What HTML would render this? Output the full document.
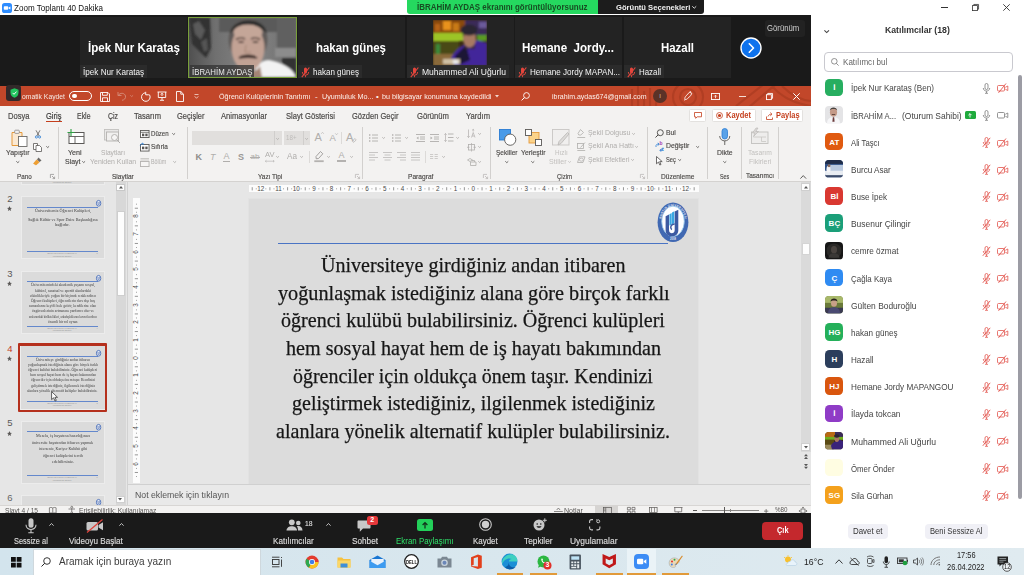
<!DOCTYPE html>
<html lang="tr">
<head>
<meta charset="utf-8">
<title>Zoom Toplantı 40 Dakika</title>
<style>
*{box-sizing:border-box;margin:0;padding:0}
html,body{width:1024px;height:575px;overflow:hidden;background:#fff}
body{font-family:"Liberation Sans",sans-serif;position:relative;color:#222}
.a{position:absolute}
.t{position:absolute;white-space:nowrap}
svg{position:absolute;overflow:visible}
</style>
</head>
<body>
<!-- sec_top -->
<div class="a" style="left:0px;top:0px;width:811px;height:15px;background:#fff;"></div>
<svg style="left:2px;top:3px" width="10" height="10" viewBox="0 0 10 10"><rect width="10" height="10" rx="2.600" fill="#2d8cff"/><rect x="1.800" y="3.200" width="4.400" height="3.600" rx="0.800" fill="#fff"/><path d="M6.600 4.600L8.400 3.400V6.600L6.600 5.400Z" fill="#fff"/></svg>
<div class="t" style="top:3px;font-size:9.5px;line-height:9.5px;color:#111;left:14px;transform-origin:0 0;transform:scaleX(0.848);">Zoom Toplantı 40 Dakika</div>
<div class="a" style="left:407px;top:0px;width:191px;height:13.5px;background:#25d85f;border-radius:0 0 0 3px;"></div>
<div class="t" style="top:3px;font-size:8.5px;line-height:8.5px;color:#174d22;font-weight:bold;left:417px;transform-origin:0 0;transform:scaleX(0.936);">İBRAHİM AYDAŞ ekranını görüntülüyorsunuz</div>
<div class="a" style="left:597.5px;top:0px;width:106.2px;height:13.5px;background:#1c1c1c;border-radius:0 0 3px 0;"></div>
<div class="t" style="top:4px;font-size:8px;line-height:8px;color:#f0f0f0;font-weight:bold;left:615.6px;transform-origin:0 0;transform:scaleX(0.951);">Görüntü Seçenekleri</div>
<svg style="left:692.45px;top:6.1px" width="4.5" height="2.4" viewBox="0 0 4.5 2.4"><path d="M0.3 0.3L2.25 2.2L4.2 0.3" stroke="#eee" stroke-width="0.9" fill="none"/></svg>
<div class="a" style="left:0px;top:15px;width:811px;height:71px;background:#1a1a1a;"></div>
<div class="a" style="left:80px;top:17px;width:107px;height:61px;background:#232323;"></div>
<div class="t" style="top:42px;font-size:12.5px;line-height:12.5px;color:#fff;font-weight:bold;left:87.5px;transform-origin:0 0;transform:scaleX(0.926);">İpek Nur Karataş</div>
<div class="a" style="left:80px;top:65px;width:67px;height:13px;background:rgba(44,44,44,.9);"></div><div class="t" style="top:67px;font-size:9.5px;line-height:9.5px;color:#f4f4f4;left:83px;transform-origin:0 0;transform:scaleX(0.856);">İpek Nur Karataş</div>
<div class="a" style="left:188px;top:17px;width:109px;height:61px;border:1px solid #789f3a;overflow:hidden;background:#666"><svg style="left:0;top:0" width="107" height="59" viewBox="0 0 107 59">
<defs><linearGradient id="pg" x1="0" x2="1"><stop offset="0" stop-color="#505050"/><stop offset="0.25" stop-color="#707070"/><stop offset="0.6" stop-color="#858585"/><stop offset="1" stop-color="#6c6c6c"/></linearGradient>
<filter id="bl" x="-20%" y="-20%" width="140%" height="140%"><feGaussianBlur stdDeviation="1"/></filter>
<clipPath id="pc"><rect width="107" height="59"/></clipPath></defs>
<g clip-path="url(#pc)"><rect width="107" height="59" fill="url(#pg)"/>
<g filter="url(#bl)">
<path d="M0 0H21L22 30L17 40L3 26Z" fill="#303030"/>
<path d="M4 6L10 3L16 12L12 22L6 16Z" fill="#5a5a5a"/><path d="M12 24L18 20L19 32L15 34Z" fill="#555"/>
<rect x="30" y="0" width="77" height="14" fill="#5a5a5a"/>
<rect x="88" y="0" width="19" height="30" fill="#606060"/>
<rect x="93" y="40" width="14" height="19" fill="#333"/>
<rect x="86" y="30" width="21" height="9" fill="#8c8c8c"/>
<path d="M64 59C66 48 72 42 80 42C92 44 104 50 107 59Z" fill="#f2f2f2"/>
<ellipse cx="59" cy="22" rx="19.500" ry="22" fill="#5e5a58"/>
<path d="M41 16C43 -2 76 -2 78 16C72 6 47 6 41 16Z" fill="#2c2a29"/>
<ellipse cx="59" cy="30" rx="16.500" ry="23" fill="#c2a294"/>
<ellipse cx="59" cy="14" rx="14.500" ry="7.500" fill="#c4a698"/>
<path d="M47 21.500C50 19.500 54 19.800 56 21M62 21C64 19.800 68 19.500 71 21.500" stroke="#4a3a34" stroke-width="1.600" fill="none"/>
<ellipse cx="52" cy="24" rx="3" ry="1.100" fill="#4c3c36"/><ellipse cx="66.500" cy="24" rx="3" ry="1.100" fill="#4c3c36"/>
<path d="M57 27L56 34H62" stroke="#a88878" stroke-width="1.200" fill="none"/>
<path d="M50 40C54 36.500 64 36.500 68 40C64 38.800 54 38.800 50 40Z" fill="#3c2e2a" stroke="#3c2e2a" stroke-width="1.600"/>
<path d="M47 48C52 57 66 57 71 48L73 59H46Z" fill="#a48474"/>
</g></g></svg></div>
<div class="a" style="left:190.4px;top:65px;width:64px;height:12.2px;background:rgba(52,52,52,.78);"></div>
<div class="t" style="top:67px;font-size:9.5px;line-height:9.5px;color:#e8e8e8;left:191.8px;transform-origin:0 0;transform:scaleX(0.828);">İBRAHİM AYDAŞ</div>
<div class="a" style="left:298px;top:17px;width:107px;height:61px;background:#232323;"></div>
<div class="t" style="top:42px;font-size:12.5px;line-height:12.5px;color:#fff;font-weight:bold;left:316px;transform-origin:0 0;transform:scaleX(0.916);">hakan güneş</div>
<div class="a" style="left:298px;top:65px;width:64px;height:13px;background:rgba(44,44,44,.9);"></div><svg style="left:301px;top:66.5px" width="9" height="11" viewBox="0 0 9 11"><rect x="3" y="0.5" width="3" height="6" rx="1.5" fill="#e5453c"/><path d="M1.3 5a3.2 3.2 0 0 0 6.4 0M4.5 8.200v2" stroke="#e5453c" stroke-width="0.9" fill="none"/><path d="M8.300 0.500L0.800 10.200" stroke="#e5453c" stroke-width="1.1"/></svg><div class="t" style="top:67px;font-size:9.5px;line-height:9.5px;color:#f4f4f4;left:313px;transform-origin:0 0;transform:scaleX(0.845);">hakan güneş</div>
<div class="a" style="left:407px;top:17px;width:107px;height:61px;background:#232323;"></div>
<div class="a" style="left:407px;top:17px;width:107px;height:61px"><svg style="left:26px;top:3px" width="54" height="46" viewBox="0 0 54 46">
<defs><filter id="b2" x="-10%" y="-10%" width="120%" height="120%"><feGaussianBlur stdDeviation="0.9"/></filter><clipPath id="c4"><rect width="54" height="46"/></clipPath></defs>
<g clip-path="url(#c4)"><rect width="54" height="46" fill="#3a2a12"/>
<g filter="url(#b2)">
<rect x="0" y="0" width="32" height="14" fill="#8a4a10"/>
<rect x="10" y="1" width="8" height="9" fill="#e8921c"/><rect x="20" y="3" width="6" height="8" fill="#c87a18"/><rect x="2" y="4" width="5" height="7" fill="#b86414"/>
<rect x="32" y="0" width="22" height="16" fill="#3a2a58"/><rect x="46" y="2" width="8" height="6" fill="#6a5a9a"/>
<rect x="0" y="13" width="30" height="8" fill="#9cc428"/><rect x="44" y="15" width="10" height="6" fill="#5a9a22"/>
<rect x="0" y="21" width="26" height="13" fill="#4a4a18"/><rect x="3" y="24" width="4" height="14" fill="#3a8a3a"/>
<rect x="0" y="34" width="24" height="12" fill="#8a6a3a"/>
<path d="M18 38C24 27 32 23 44 20L54 23V46H22Z" fill="#43289a"/>
<path d="M22 36L33 25L37 40L26 45Z" fill="#1c1634"/>
<ellipse cx="36.500" cy="19" rx="6.500" ry="8.500" fill="#a87a62"/>
<ellipse cx="36" cy="10" rx="8.500" ry="5.500" fill="#2c2832"/>
<path d="M31 24C33 29.500 40 29.500 42.500 23L41.500 29H32Z" fill="#3a2a28"/>
<rect x="10" y="39" width="17" height="5" fill="#d0c0a4"/><rect x="20" y="40" width="5" height="4" fill="#e8e8e8"/>
</g></g></svg></div>
<div class="a" style="left:407px;top:65px;width:102px;height:13px;background:rgba(44,44,44,.9);"></div><svg style="left:410px;top:66.5px" width="9" height="11" viewBox="0 0 9 11"><rect x="3" y="0.5" width="3" height="6" rx="1.5" fill="#e5453c"/><path d="M1.3 5a3.2 3.2 0 0 0 6.4 0M4.5 8.200v2" stroke="#e5453c" stroke-width="0.9" fill="none"/><path d="M8.300 0.500L0.800 10.200" stroke="#e5453c" stroke-width="1.1"/></svg><div class="t" style="top:67px;font-size:9.5px;line-height:9.5px;color:#f4f4f4;left:422px;transform-origin:0 0;transform:scaleX(0.899);">Muhammed Ali Uğurlu</div>
<div class="a" style="left:515px;top:17px;width:107px;height:61px;background:#232323;"></div>
<div class="t" style="top:42px;font-size:12.5px;line-height:12.5px;color:#fff;font-weight:bold;left:522px;transform-origin:0 0;transform:scaleX(0.928);">Hemane&nbsp; Jordy...</div>
<div class="a" style="left:515px;top:65px;width:107px;height:13px;background:rgba(44,44,44,.9);"></div><svg style="left:518px;top:66.5px" width="9" height="11" viewBox="0 0 9 11"><rect x="3" y="0.5" width="3" height="6" rx="1.5" fill="#e5453c"/><path d="M1.3 5a3.2 3.2 0 0 0 6.4 0M4.5 8.200v2" stroke="#e5453c" stroke-width="0.9" fill="none"/><path d="M8.300 0.500L0.800 10.200" stroke="#e5453c" stroke-width="1.1"/></svg><div class="t" style="top:67px;font-size:9.5px;line-height:9.5px;color:#f4f4f4;left:530px;transform-origin:0 0;transform:scaleX(0.854);">Hemane Jordy MAPAN...</div>
<div class="a" style="left:624px;top:17px;width:107px;height:61px;background:#232323;"></div>
<div class="t" style="top:42px;font-size:12.5px;line-height:12.5px;color:#fff;font-weight:bold;left:661px;transform-origin:0 0;transform:scaleX(0.913);">Hazall</div>
<div class="a" style="left:624px;top:65px;width:40px;height:13px;background:rgba(44,44,44,.9);"></div><svg style="left:627px;top:66.5px" width="9" height="11" viewBox="0 0 9 11"><rect x="3" y="0.5" width="3" height="6" rx="1.5" fill="#e5453c"/><path d="M1.3 5a3.2 3.2 0 0 0 6.4 0M4.5 8.200v2" stroke="#e5453c" stroke-width="0.9" fill="none"/><path d="M8.300 0.500L0.800 10.200" stroke="#e5453c" stroke-width="1.1"/></svg><div class="t" style="top:67px;font-size:9.5px;line-height:9.5px;color:#f4f4f4;left:639px;transform-origin:0 0;transform:scaleX(0.833);">Hazall</div>
<svg style="left:740px;top:36.5px" width="22" height="22" viewBox="0 0 22 22"><circle cx="11" cy="11" r="10" fill="#0e72ed" stroke="#fff" stroke-width="1.400"/><path d="M9.300 6.800L13.500 11L9.300 15.200" stroke="#fff" stroke-width="1.600" fill="none" stroke-linecap="round" stroke-linejoin="round"/></svg>
<div class="a" style="left:765px;top:20px;width:40px;height:17px;background:#222;border-radius:3px;"></div>
<div class="t" style="top:24px;font-size:8.5px;line-height:8.5px;color:#d0d0d0;left:767.3px;transform-origin:0 0;transform:scaleX(0.909);">Görünüm</div>
<!-- sec_pp -->
<div class="a" style="left:0px;top:86px;width:811px;height:20.4px;background:#c2472a;"></div>
<div class="a" style="left:560px;top:86px;width:251px;height:20px;overflow:hidden"><svg style="left:0;top:0" width="251" height="20" viewBox="0 0 251 20"><g fill="none" stroke="#ad3d22" stroke-width="2.200" opacity="0.800"><circle cx="128" cy="11" r="8"/><circle cx="128" cy="11" r="15"/><path d="M72 3V20M78 0V20M84 5V20M90 2V20M96 6V20M176 20L204 -2M188 22L216 -2M222 0C230 8 240 14 251 15M212 0C222 12 238 18 251 20"/></g></svg></div>
<div class="a" style="left:5.6px;top:85.2px;width:15.6px;height:15.4px;background:#33292a;border-radius:3px;"></div>
<svg style="left:9.5px;top:88px" width="9" height="10" viewBox="0 0 9 10"><path d="M4.500 0.300L8.500 1.700V4.800C8.500 7.300 6.800 9 4.500 9.800C2.200 9 0.500 7.300 0.500 4.800V1.700Z" fill="#22c55e"/><path d="M2.600 4.900L4 6.300L6.500 3.600" stroke="#fff" stroke-width="1" fill="none"/></svg>
<div class="t" style="top:93px;font-size:8px;line-height:8px;color:#f6e9e4;left:22px;transform-origin:0 0;transform:scaleX(0.848);">omatik Kaydet</div>
<div class="a" style="left:69px;top:91.200px;width:23px;height:9.500px;border:1px solid #fff;border-radius:5px"></div>
<div class="a" style="left:72px;top:93.7px;width:4.5px;height:4.5px;background:#fff;border-radius:50%;"></div>
<svg style="left:99.6px;top:91.6px" width="10" height="10" viewBox="0 0 10 10"><path d="M0.500 0.500H8L9.500 2V9.500H0.500Z" fill="none" stroke="#fff" stroke-width="0.900"/><path d="M2.500 0.500V3.300H7.300V0.500M2.500 9.500V5.800H7.500V9.500" fill="none" stroke="#fff" stroke-width="0.900"/></svg>
<svg style="left:117px;top:91px" width="10" height="10" viewBox="0 0 10 10"><path d="M1 1V4.500H4.500M1.300 4.300C3 1.600 7.500 1.500 8.500 5C9 7.500 7 9 5 9.300" fill="none" stroke="#d58a76" stroke-width="0.950"/></svg>
<svg style="left:129.8px;top:95.1px" width="3.4" height="1.8" viewBox="0 0 3.4 1.8"><path d="M0.3 0.3L1.7 1.6L3.1 0.3" stroke="#d58a76" stroke-width="0.8" fill="none"/></svg>
<svg style="left:139.5px;top:90.5px" width="11" height="11" viewBox="0 0 11 11"><path d="M4.500 1.300A4.300 4.300 0 1 0 8.800 3M5.200 0.300V3.300H8.300" fill="none" stroke="#fff" stroke-width="0.950" transform="translate(0.5,0.5)"/></svg>
<svg style="left:156.5px;top:91px" width="10" height="10" viewBox="0 0 10 10"><path d="M0.500 1H9.500M1.300 1V6.500H8.700V1M5 6.500V9M3 9.300H7M5 2.300V5M3.800 3.500L5 2.300L6.200 3.500" fill="none" stroke="#fff" stroke-width="0.900"/></svg>
<svg style="left:176px;top:90.5px" width="8" height="11" viewBox="0 0 8 11"><path d="M0.500 0.500H4.800L7.500 3.200V10.500H0.500ZM4.800 0.500V3.200H7.500" fill="none" stroke="#fff" stroke-width="0.900"/></svg>
<svg style="left:193.5px;top:93.5px" width="5" height="5" viewBox="0 0 5 5"><path d="M0.500 0.500H4.500" stroke="#f3d9d0" stroke-width="0.800"/><path d="M0.700 2.300L2.500 4.300L4.300 2.300" stroke="#f3d9d0" stroke-width="0.800" fill="none"/></svg>
<div class="t" style="top:93px;font-size:8px;line-height:8px;color:#fdf1ec;left:219px;transform-origin:0 0;transform:scaleX(0.892);">Öğrenci Kulüplerinin Tanıtımı</div>
<div class="t" style="top:93px;font-size:8px;line-height:8px;color:#fdf1ec;left:315px;">-</div>
<div class="t" style="top:93px;font-size:8px;line-height:8px;color:#fdf1ec;left:321.5px;transform-origin:0 0;transform:scaleX(0.898);">Uyumluluk Mo...</div>
<div class="t" style="top:93px;font-size:8px;line-height:8px;color:#fdf1ec;left:376px;">•</div>
<div class="t" style="top:93px;font-size:8px;line-height:8px;color:#fdf1ec;left:381.5px;transform-origin:0 0;transform:scaleX(0.895);">bu bilgisayar konumuna kaydedildi</div>
<svg style="left:495px;top:95px" width="4" height="2.5" viewBox="0 0 4 2.5"><path d="M0 0H4L2 2.500Z" fill="#f3d9d0"/></svg>
<svg style="left:521px;top:91.5px" width="9" height="9" viewBox="0 0 9 9"><circle cx="5.500" cy="3.500" r="2.900" fill="none" stroke="#fff" stroke-width="0.900"/><path d="M3.400 5.600L0.600 8.400" stroke="#fff" stroke-width="1"/></svg>
<div class="t" style="top:93px;font-size:8px;line-height:8px;color:#fdf1ec;left:551.5px;transform-origin:0 0;transform:scaleX(0.877);">ibrahim.aydas674@gmail.com</div>
<div class="a" style="left:653px;top:89px;width:14px;height:14px;background:#5b3227;border-radius:50%;"></div>
<div class="t" style="top:93px;font-size:6px;line-height:6px;color:#d9c0b8;left:660px;transform:translateX(-50%);">I</div>
<svg style="left:683px;top:91px" width="10" height="10" viewBox="0 0 10 10"><path d="M2 8.500L1.200 9.300M2 8.500C1.500 7 2.200 5.800 3.200 4.800L6.500 1.200L8.800 2.200L7.800 4.500L4.600 7.500C3.800 8.300 2.800 8.700 2 8.500ZM6.500 1.200L8 0.500" fill="none" stroke="#fff" stroke-width="0.850"/></svg>
<svg style="left:710.5px;top:92.5px" width="9" height="7" viewBox="0 0 9 7"><rect x="0.450" y="0.450" width="8.100" height="6.100" fill="none" stroke="#fff" stroke-width="0.900"/><path d="M4.500 5.200V2.400M3.200 3.500L4.500 2.200L5.800 3.500" stroke="#fff" stroke-width="0.800" fill="none"/></svg>
<div class="a" style="left:738.5px;top:95.5px;width:7px;height:1px;background:#f5ddd5;"></div>
<svg style="left:765.5px;top:92.5px" width="7" height="7" viewBox="0 0 7 7"><rect x="0.450" y="1.700" width="4.900" height="4.900" fill="none" stroke="#fff" stroke-width="0.900"/><path d="M1.700 1.700V0.450H6.550V5.300H5.300" fill="none" stroke="#fff" stroke-width="0.900"/></svg>
<svg style="left:793px;top:92.5px" width="7" height="7" viewBox="0 0 7 7"><path d="M0.300 0.300L6.700 6.700M6.700 0.300L0.300 6.700" stroke="#fff" stroke-width="1"/></svg>
<div class="a" style="left:0px;top:106px;width:811px;height:20px;background:#f3f2f1;"></div>
<div class="t" style="top:111px;font-size:9.5px;line-height:9.5px;color:#4c4a48;left:7.5px;transform-origin:0 0;transform:scaleX(0.798);-webkit-text-stroke:0.200px;">Dosya</div>
<div class="t" style="top:111px;font-size:9.5px;line-height:9.5px;color:#3b3a39;left:45.7px;transform-origin:0 0;transform:scaleX(0.794);-webkit-text-stroke:0.200px;">Giriş</div>
<div class="t" style="top:111px;font-size:9.5px;line-height:9.5px;color:#4c4a48;left:77px;transform-origin:0 0;transform:scaleX(0.730);-webkit-text-stroke:0.200px;">Ekle</div>
<div class="t" style="top:111px;font-size:9.5px;line-height:9.5px;color:#4c4a48;left:107.6px;transform-origin:0 0;transform:scaleX(0.728);-webkit-text-stroke:0.200px;">Çiz</div>
<div class="t" style="top:111px;font-size:9.5px;line-height:9.5px;color:#4c4a48;left:133.6px;transform-origin:0 0;transform:scaleX(0.799);-webkit-text-stroke:0.200px;">Tasarım</div>
<div class="t" style="top:111px;font-size:9.5px;line-height:9.5px;color:#4c4a48;left:176.6px;transform-origin:0 0;transform:scaleX(0.789);-webkit-text-stroke:0.200px;">Geçişler</div>
<div class="t" style="top:111px;font-size:9.5px;line-height:9.5px;color:#4c4a48;left:221.2px;transform-origin:0 0;transform:scaleX(0.799);-webkit-text-stroke:0.200px;">Animasyonlar</div>
<div class="t" style="top:111px;font-size:9.5px;line-height:9.5px;color:#4c4a48;left:286px;transform-origin:0 0;transform:scaleX(0.800);-webkit-text-stroke:0.200px;">Slayt Gösterisi</div>
<div class="t" style="top:111px;font-size:9.5px;line-height:9.5px;color:#4c4a48;left:352px;transform-origin:0 0;transform:scaleX(0.793);-webkit-text-stroke:0.200px;">Gözden Geçir</div>
<div class="t" style="top:111px;font-size:9.5px;line-height:9.5px;color:#4c4a48;left:416.7px;transform-origin:0 0;transform:scaleX(0.808);-webkit-text-stroke:0.200px;">Görünüm</div>
<div class="t" style="top:111px;font-size:9.5px;line-height:9.5px;color:#4c4a48;left:465.8px;transform-origin:0 0;transform:scaleX(0.802);-webkit-text-stroke:0.200px;">Yardım</div>
<div class="a" style="left:45.6px;top:120.7px;width:16px;height:1.8px;background:#c43e1c;"></div>
<div class="a" style="left:688.500px;top:109px;width:17.500px;height:12.500px;background:#fff;border:1px solid #e3e1df;border-radius:1.500px"></div>
<svg style="left:693.5px;top:112px" width="8" height="7" viewBox="0 0 8 7"><path d="M0.500 0.500H7.500V4.800H3.200L1.700 6.300V4.800H0.500Z" fill="none" stroke="#c43e1c" stroke-width="0.800"/></svg>
<div class="a" style="left:712px;top:109px;width:43.500px;height:12.500px;background:#fff;border:1px solid #e3e1df;border-radius:1.500px"></div>
<svg style="left:715.5px;top:111.8px" width="7" height="7" viewBox="0 0 7 7"><circle cx="3.500" cy="3.500" r="3" fill="none" stroke="#c43e1c" stroke-width="0.800"/><circle cx="3.500" cy="3.500" r="1.600" fill="#c43e1c"/></svg>
<div class="t" style="top:111px;font-size:9px;line-height:9px;color:#c43e1c;font-weight:bold;left:725.5px;transform-origin:0 0;transform:scaleX(0.833);">Kaydet</div>
<div class="a" style="left:761px;top:109px;width:42px;height:12.500px;background:#fff;border:1px solid #e3e1df;border-radius:1.500px"></div>
<svg style="left:765.5px;top:111.5px" width="8" height="8" viewBox="0 0 8 8"><path d="M0.500 4.500V7.500H6.500V5.500M2 4.500C2.500 2.800 4 2.200 5.500 2.200M4.300 0.600L6 2.200L4.300 3.800" fill="none" stroke="#c43e1c" stroke-width="0.800"/></svg>
<div class="t" style="top:111px;font-size:9px;line-height:9px;color:#c43e1c;font-weight:bold;left:776px;transform-origin:0 0;transform:scaleX(0.824);">Paylaş</div>
<div class="a" style="left:0px;top:126px;width:811px;height:55px;background:#f3f2f1;"></div>
<div class="a" style="left:0px;top:180.5px;width:811px;height:1.5px;background:#d4d2d0;"></div>
<svg style="left:10.5px;top:128.5px" width="17" height="18" viewBox="0 0 17 18"><path d="M1 3.500H11V16.500H1Z" fill="#fbe9d2" stroke="#e59a3c" stroke-width="1"/><rect x="3.700" y="1.200" width="4.600" height="3.200" rx="0.800" fill="#f3f2f1" stroke="#8a8886" stroke-width="0.800"/><rect x="7.500" y="7.500" width="8.500" height="10" fill="#fff" stroke="#6b6967" stroke-width="0.900"/></svg>
<div class="t" style="top:149px;font-size:7.6px;line-height:7.6px;color:#4a4846;left:6px;transform-origin:0 0;transform:scaleX(0.918);-webkit-text-stroke:0.150px;">Yapıştır</div>
<svg style="left:15.5px;top:161.05px" width="3.6" height="1.9" viewBox="0 0 3.6 1.9"><path d="M0.3 0.3L1.8 1.7L3.3 0.3" stroke="#605e5c" stroke-width="0.9" fill="none"/></svg>
<svg style="left:34.5px;top:129.5px" width="6" height="8.5" viewBox="0 0 6 8.5"><path d="M1 0.300L4.200 6M5 0.300L1.800 6" stroke="#5a5856" stroke-width="0.800" fill="none"/><circle cx="1.400" cy="7" r="1.100" fill="none" stroke="#2b7cd3" stroke-width="0.800"/><circle cx="4.600" cy="7" r="1.100" fill="none" stroke="#2b7cd3" stroke-width="0.800"/></svg>
<svg style="left:33px;top:142.5px" width="9" height="9" viewBox="0 0 9 9"><path d="M0.500 0.500H4.500V6.500H0.500Z" fill="#fff" stroke="#5a5856" stroke-width="0.800"/><path d="M3 2.500H6.500L8.500 4.500V8.500H3Z" fill="#fff" stroke="#5a5856" stroke-width="0.800"/></svg>
<svg style="left:46.3px;top:146.1px" width="3.4" height="1.8" viewBox="0 0 3.4 1.8"><path d="M0.3 0.3L1.7 1.6L3.1 0.3" stroke="#605e5c" stroke-width="0.9" fill="none"/></svg>
<svg style="left:33px;top:157px" width="9" height="8.5" viewBox="0 0 9 8.5"><path d="M5.500 0.500L8.500 3.500L6.500 5L4 2.500Z" fill="#6b6967"/><path d="M3.700 2.800L6.200 5.300L3 8L0.500 6.500Z" fill="#f0a030" stroke="#e08a18" stroke-width="0.500"/></svg>
<div class="t" style="top:173px;font-size:7.4px;line-height:7.4px;color:#4a4846;left:16.6px;transform-origin:0 0;transform:scaleX(0.851);-webkit-text-stroke:0.150px;">Pano</div>
<svg style="left:50.2px;top:174.3px" width="5" height="5" viewBox="0 0 5 5"><path d="M0.400 4V0.400H4M2 2L4.600 4.600M4.600 2.600V4.600H2.600" stroke="#8a8886" stroke-width="0.700" fill="none"/></svg>
<div class="a" style="left:57.5px;top:127px;width:1px;height:51.5px;background:#d2d0ce;"></div>
<svg style="left:66.5px;top:128.5px" width="18" height="15" viewBox="0 0 18 15"><rect x="2" y="3.500" width="15" height="11" fill="#fff" stroke="#5a5856" stroke-width="1"/><path d="M2 7.500H17M8 7.500V14.500" stroke="#5a5856" stroke-width="0.900"/><path d="M4 0V7M0.500 3.500H7.500" stroke="#2f9e44" stroke-width="1.100"/></svg>
<div class="t" style="top:149px;font-size:7.6px;line-height:7.6px;color:#4a4846;left:68.4px;transform-origin:0 0;transform:scaleX(0.937);-webkit-text-stroke:0.150px;">Yeni</div>
<div class="t" style="top:158px;font-size:7.6px;line-height:7.6px;color:#4a4846;left:64.5px;transform-origin:0 0;transform:scaleX(0.918);-webkit-text-stroke:0.150px;">Slayt</div>
<svg style="left:81.6px;top:161.4px" width="3.4" height="1.8" viewBox="0 0 3.4 1.8"><path d="M0.3 0.3L1.7 1.6L3.1 0.3" stroke="#605e5c" stroke-width="0.9" fill="none"/></svg>
<svg style="left:104px;top:129px" width="17" height="15" viewBox="0 0 17 15"><rect x="0.500" y="0.500" width="14" height="10.500" fill="#e9e8e7" stroke="#c2c0be" stroke-width="0.900"/><rect x="2.500" y="3" width="12" height="9" fill="#f1f0ef" stroke="#b4b2b0" stroke-width="0.900"/><circle cx="10.500" cy="8.500" r="3" fill="#f6f5f4" stroke="#b0aeac" stroke-width="0.900"/><path d="M12.700 10.700L16 14" stroke="#b0aeac" stroke-width="1"/></svg>
<div class="t" style="top:149px;font-size:7.6px;line-height:7.6px;color:#b0aeac;left:100.6px;transform-origin:0 0;transform:scaleX(0.875);">Slaytları</div>
<div class="t" style="top:158px;font-size:7.6px;line-height:7.6px;color:#b0aeac;left:89.5px;transform-origin:0 0;transform:scaleX(0.917);">Yeniden Kullan</div>
<svg style="left:139.5px;top:129.5px" width="9.5" height="8" viewBox="0 0 9.5 8"><rect x="0.450" y="0.450" width="8.600" height="7.100" fill="#fff" stroke="#5a5856" stroke-width="0.900"/><path d="M0.500 2.300H9" stroke="#5a5856" stroke-width="0.800"/><rect x="2" y="3.600" width="2.300" height="2.600" fill="#5a5856"/><rect x="5.300" y="3.600" width="2.300" height="2.600" fill="#5a5856"/></svg>
<div class="t" style="top:130px;font-size:7.6px;line-height:7.6px;color:#4a4846;left:150.8px;transform-origin:0 0;transform:scaleX(0.802);-webkit-text-stroke:0.150px;">Düzen</div>
<svg style="left:172.1px;top:133.1px" width="3.4" height="1.8" viewBox="0 0 3.4 1.8"><path d="M0.3 0.3L1.7 1.6L3.1 0.3" stroke="#605e5c" stroke-width="0.9" fill="none"/></svg>
<svg style="left:139.5px;top:143px" width="9.5" height="8.5" viewBox="0 0 9.5 8.5"><rect x="0.450" y="1.450" width="8.600" height="6.600" fill="#fff" stroke="#5a5856" stroke-width="0.900"/><rect x="2" y="3.600" width="2.300" height="2.600" fill="#5a5856"/><rect x="5.300" y="3.600" width="2.300" height="2.600" fill="#5a5856"/><path d="M0.300 2.800C0.300 0.800 2 0.300 3.300 0.800M2.300 0L3.500 0.900L2.500 2" stroke="#2b7cd3" stroke-width="0.800" fill="none"/></svg>
<div class="t" style="top:143px;font-size:7.6px;line-height:7.6px;color:#4a4846;left:150.8px;transform-origin:0 0;transform:scaleX(0.847);-webkit-text-stroke:0.150px;">Sıfırla</div>
<svg style="left:139.5px;top:157.5px" width="9.5" height="9" viewBox="0 0 9.5 9"><path d="M0.500 0.500H9M0.500 2H9" stroke="#c2c0be" stroke-width="0.800"/><rect x="0.450" y="3.450" width="8.600" height="5.100" fill="#f6f5f4" stroke="#b4b2b0" stroke-width="0.900"/></svg>
<div class="t" style="top:158px;font-size:7.6px;line-height:7.6px;color:#b0aeac;left:150.8px;transform-origin:0 0;transform:scaleX(0.706);">Bölüm</div>
<svg style="left:173.1px;top:161.4px" width="3.4" height="1.8" viewBox="0 0 3.4 1.8"><path d="M0.3 0.3L1.7 1.6L3.1 0.3" stroke="#b0aeac" stroke-width="0.9" fill="none"/></svg>
<div class="t" style="top:173px;font-size:7.4px;line-height:7.4px;color:#4a4846;left:112px;transform-origin:0 0;transform:scaleX(0.884);-webkit-text-stroke:0.150px;">Slaytlar</div>
<div class="a" style="left:186.5px;top:127px;width:1px;height:51.5px;background:#d2d0ce;"></div>
<div class="a" style="left:191.7px;top:131.3px;width:90px;height:13.5px;background:#e1dfdd;"></div>
<div class="a" style="left:274px;top:131.3px;width:0.7px;height:13.5px;background:#d0cecc;"></div>
<svg style="left:276.2px;top:137.65px" width="3.2" height="1.7" viewBox="0 0 3.2 1.7"><path d="M0.3 0.3L1.6 1.5L2.9 0.3" stroke="#b0aeac" stroke-width="0.9" fill="none"/></svg>
<div class="a" style="left:283.5px;top:131.3px;width:26.5px;height:13.5px;background:#e1dfdd;"></div>
<div class="a" style="left:303px;top:131.3px;width:0.7px;height:13.5px;background:#d0cecc;"></div>
<div class="t" style="top:134px;font-size:8px;line-height:8px;color:#bebcba;left:285.5px;transform-origin:0 0;transform:scaleX(0.773);">18+</div>
<svg style="left:304.9px;top:137.65px" width="3.2" height="1.7" viewBox="0 0 3.2 1.7"><path d="M0.3 0.3L1.6 1.5L2.9 0.3" stroke="#b0aeac" stroke-width="0.9" fill="none"/></svg>
<div class="t" style="top:132px;font-size:11px;line-height:11px;color:#b0aeac;left:314.4px;">A</div>
<svg style="left:321px;top:132px" width="3" height="2" viewBox="0 0 3 2"><path d="M0.200 1.800L1.500 0.300L2.800 1.800" stroke="#b0aeac" stroke-width="0.600" fill="none"/></svg>
<div class="t" style="top:133px;font-size:9.5px;line-height:9.5px;color:#b0aeac;left:329.4px;">A</div>
<svg style="left:334.5px;top:132.5px" width="3" height="2" viewBox="0 0 3 2"><path d="M0.200 0.300L1.500 1.800L2.800 0.300" stroke="#b0aeac" stroke-width="0.600" fill="none"/></svg>
<div class="a" style="left:341px;top:132px;width:1px;height:12px;background:#dcdad8;"></div>
<div class="t" style="top:132px;font-size:11px;line-height:11px;color:#b0aeac;left:346px;">A</div>
<svg style="left:351.5px;top:138px" width="4.5" height="4.5" viewBox="0 0 4.5 4.5"><path d="M2.800 0.500L4.200 1.900L2 4.100H1L0.400 3.300Z" fill="none" stroke="#b0aeac" stroke-width="0.700"/></svg>
<div class="t" style="top:153px;font-size:9px;line-height:9px;color:#8f8d8b;font-weight:bold;left:195.6px;">K</div>
<div class="t" style="top:153px;font-size:9px;line-height:9px;color:#b0aeac;font-style:italic;left:210px;">T</div>
<div class="t" style="top:152px;font-size:9px;line-height:9px;color:#b0aeac;left:223.5px;">A</div>
<div class="a" style="left:223px;top:161.2px;width:7px;height:0.8px;background:#b0aeac;"></div>
<div class="t" style="top:153px;font-size:9px;line-height:9px;color:#9a9896;font-weight:bold;left:238px;">S</div>
<div class="t" style="top:153px;font-size:8px;line-height:8px;color:#b0aeac;left:250.5px;">ab</div>
<div class="a" style="left:250px;top:156.8px;width:10px;height:0.7px;background:#b0aeac;"></div>
<div class="t" style="top:151px;font-size:7.5px;line-height:7.5px;color:#b0aeac;left:264.5px;transform-origin:0 0;transform:scaleX(1.005);">AV</div>
<svg style="left:264.5px;top:159.8px" width="9.5" height="2.5" viewBox="0 0 9.5 2.5"><path d="M0.300 1.200H9.200M1.500 0.200L0.300 1.200L1.500 2.200M8 0.200L9.200 1.200L8 2.200" stroke="#b0aeac" stroke-width="0.600" fill="none"/></svg>
<svg style="left:276.4px;top:156.15px" width="3.2" height="1.7" viewBox="0 0 3.2 1.7"><path d="M0.3 0.3L1.6 1.5L2.9 0.3" stroke="#b0aeac" stroke-width="0.9" fill="none"/></svg>
<div class="t" style="top:152px;font-size:9px;line-height:9px;color:#b0aeac;left:287px;transform-origin:0 0;transform:scaleX(0.908);">Aa</div>
<svg style="left:299.9px;top:156.15px" width="3.2" height="1.7" viewBox="0 0 3.2 1.7"><path d="M0.3 0.3L1.6 1.5L2.9 0.3" stroke="#b0aeac" stroke-width="0.9" fill="none"/></svg>
<div class="a" style="left:308.5px;top:151px;width:1px;height:12px;background:#dcdad8;"></div>
<svg style="left:314px;top:150.5px" width="10" height="11.5" viewBox="0 0 10 11.5"><path d="M6.500 0.500L8.800 2.800L4.500 7.500L2.200 7.800L2 5.500Z" fill="none" stroke="#8f8d8b" stroke-width="0.800"/><rect x="0.300" y="9.300" width="9.400" height="1.800" fill="#b4b2b0"/></svg>
<svg style="left:327.4px;top:156.15px" width="3.2" height="1.7" viewBox="0 0 3.2 1.7"><path d="M0.3 0.3L1.6 1.5L2.9 0.3" stroke="#b0aeac" stroke-width="0.9" fill="none"/></svg>
<div class="t" style="top:151px;font-size:9px;line-height:9px;color:#b0aeac;left:338.5px;">A</div>
<div class="a" style="left:337px;top:160.2px;width:9.4px;height:1.8px;background:#b4b2b0;"></div>
<svg style="left:350.4px;top:156.15px" width="3.2" height="1.7" viewBox="0 0 3.2 1.7"><path d="M0.3 0.3L1.6 1.5L2.9 0.3" stroke="#b0aeac" stroke-width="0.9" fill="none"/></svg>
<div class="t" style="top:173px;font-size:7.4px;line-height:7.4px;color:#4a4846;left:257.7px;transform-origin:0 0;transform:scaleX(0.874);-webkit-text-stroke:0.150px;">Yazı Tipi</div>
<svg style="left:354.5px;top:174.3px" width="5" height="5" viewBox="0 0 5 5"><path d="M0.400 4V0.400H4M2 2L4.600 4.600M4.600 2.600V4.600H2.600" stroke="#b4b2b0" stroke-width="0.700" fill="none"/></svg>
<div class="a" style="left:361.5px;top:127px;width:1px;height:51.5px;background:#d2d0ce;"></div>
<svg style="left:368.8px;top:133.6px" width="9" height="8" viewBox="0 0 9 8"><path d="M3 1H9M3 4H9M3 7H9" stroke="#b0aeac" stroke-width="0.900"/><rect x="0" y="0.3" width="1.400" height="1.400" fill="#b0aeac"/><rect x="0" y="3.3" width="1.400" height="1.400" fill="#b0aeac"/><rect x="0" y="6.3" width="1.400" height="1.400" fill="#b0aeac"/></svg>
<svg style="left:381.8px;top:137.15px" width="3.2" height="1.7" viewBox="0 0 3.2 1.7"><path d="M0.3 0.3L1.6 1.5L2.9 0.3" stroke="#b0aeac" stroke-width="0.9" fill="none"/></svg>
<svg style="left:391.8px;top:133.6px" width="9" height="8" viewBox="0 0 9 8"><path d="M3 1H9M3 4H9M3 7H9" stroke="#b0aeac" stroke-width="0.900"/><rect x="0" y="0.3" width="1.400" height="1.400" fill="#b0aeac"/><rect x="0" y="3.3" width="1.400" height="1.400" fill="#b0aeac"/><rect x="0" y="6.3" width="1.400" height="1.400" fill="#b0aeac"/></svg>
<svg style="left:404.9px;top:137.15px" width="3.2" height="1.7" viewBox="0 0 3.2 1.7"><path d="M0.3 0.3L1.6 1.5L2.9 0.3" stroke="#b0aeac" stroke-width="0.9" fill="none"/></svg>
<svg style="left:415.7px;top:133.6px" width="9" height="8" viewBox="0 0 9 8"><path d="M0 0.500H9M4 3H9M4 5H9M0 7.500H9" stroke="#b0aeac" stroke-width="0.900"/><path d="M2.500 2.500L0.500 4L2.500 5.500Z" fill="#b0aeac"/></svg>
<svg style="left:430.3px;top:133.6px" width="9" height="8" viewBox="0 0 9 8"><path d="M0 0.500H9M4 3H9M4 5H9M0 7.500H9" stroke="#b0aeac" stroke-width="0.900"/><path d="M0.500 2.500L2.500 4L0.500 5.500Z" fill="#b0aeac"/></svg>
<svg style="left:444.4px;top:133.1px" width="9.5" height="9" viewBox="0 0 9.5 9"><path d="M4 1H9.500M4 4.500H9.500M4 8H9.500" stroke="#b0aeac" stroke-width="0.900"/><path d="M1.500 0.500V8.500M0.300 1.800L1.500 0.500L2.700 1.800M0.300 7.200L1.500 8.500L2.700 7.200" stroke="#b0aeac" stroke-width="0.700" fill="none"/></svg>
<svg style="left:456.4px;top:137.15px" width="3.2" height="1.7" viewBox="0 0 3.2 1.7"><path d="M0.3 0.3L1.6 1.5L2.9 0.3" stroke="#b0aeac" stroke-width="0.9" fill="none"/></svg>
<svg style="left:467px;top:128.8px" width="8.5" height="9" viewBox="0 0 8.5 9"><path d="M1.500 0.500V8.500M0.300 7.200L1.500 8.500L2.700 7.200M4.500 8.500L6.200 3.500L8 8.500M5 7H7.400M6.200 0.300V2.500M5.200 1.200L6.200 0.300L7.200 1.200" stroke="#b0aeac" stroke-width="0.700" fill="none"/></svg>
<svg style="left:477.9px;top:132.65px" width="3.2" height="1.7" viewBox="0 0 3.2 1.7"><path d="M0.3 0.3L1.6 1.5L2.9 0.3" stroke="#b0aeac" stroke-width="0.9" fill="none"/></svg>
<svg style="left:466.5px;top:143px" width="9" height="8.5" viewBox="0 0 9 8.5"><rect x="1.500" y="1.500" width="6" height="5.500" fill="none" stroke="#b0aeac" stroke-width="0.800"/><path d="M0 4.300H2.500M6.500 4.300H9M4.500 0V8.500" stroke="#b0aeac" stroke-width="0.700"/></svg>
<svg style="left:477.9px;top:146.45px" width="3.2" height="1.7" viewBox="0 0 3.2 1.7"><path d="M0.3 0.3L1.6 1.5L2.9 0.3" stroke="#b0aeac" stroke-width="0.9" fill="none"/></svg>
<svg style="left:466.5px;top:157.5px" width="9.5" height="8" viewBox="0 0 9.5 8"><path d="M0.500 2L3 0.500L5.500 2L3 3.500ZM3.500 4H9V7.500H3.500ZM5 2.500H7.500V4" fill="none" stroke="#b0aeac" stroke-width="0.800"/></svg>
<svg style="left:477.9px;top:160.75px" width="3.2" height="1.7" viewBox="0 0 3.2 1.7"><path d="M0.3 0.3L1.6 1.5L2.9 0.3" stroke="#b0aeac" stroke-width="0.9" fill="none"/></svg>
<svg style="left:368.8px;top:152.2px" width="9" height="10" viewBox="0 0 9 10"><path d="M0 0.5H9M0 3H6M0 5.5H9M0 8H6" stroke="#c2c0be" stroke-width="0.9" fill="none"/></svg>
<svg style="left:383px;top:152.2px" width="9" height="10" viewBox="0 0 9 10"><path d="M0 0.5H9M1.5 3H7.5M0 5.5H9M1.5 8H7.5" stroke="#c2c0be" stroke-width="0.9" fill="none"/></svg>
<svg style="left:397.2px;top:152.2px" width="9" height="10" viewBox="0 0 9 10"><path d="M0 0.5H9M3 3H9M0 5.5H9M3 8H9" stroke="#c2c0be" stroke-width="0.9" fill="none"/></svg>
<svg style="left:411.3px;top:152.2px" width="9" height="10" viewBox="0 0 9 10"><path d="M0 0.5H9M0 3H9M0 5.5H9M0 8H9" stroke="#c2c0be" stroke-width="0.9" fill="none"/></svg>
<div class="a" style="left:424.5px;top:150.5px;width:1px;height:12.5px;background:#dcdad8;"></div>
<svg style="left:430.3px;top:153.5px" width="8" height="10" viewBox="0 0 8 10"><path d="M0 0.5H3.2M4.6 0.5H7.8M0 2.5H3.2M4.6 2.5H7.8M0 4.5H3.2M4.6 4.5H7.8" stroke="#c8c6c4" stroke-width="0.9" fill="none"/></svg>
<svg style="left:442px;top:156.15px" width="3.2" height="1.7" viewBox="0 0 3.2 1.7"><path d="M0.3 0.3L1.6 1.5L2.9 0.3" stroke="#b0aeac" stroke-width="0.9" fill="none"/></svg>
<div class="t" style="top:173px;font-size:7.4px;line-height:7.4px;color:#4a4846;left:408.4px;transform-origin:0 0;transform:scaleX(0.896);-webkit-text-stroke:0.150px;">Paragraf</div>
<svg style="left:482.5px;top:174.3px" width="5" height="5" viewBox="0 0 5 5"><path d="M0.400 4V0.400H4M2 2L4.600 4.600M4.600 2.600V4.600H2.600" stroke="#b4b2b0" stroke-width="0.700" fill="none"/></svg>
<div class="a" style="left:489.5px;top:127px;width:1px;height:51.5px;background:#d2d0ce;"></div>
<svg style="left:499px;top:128.8px" width="18" height="17" viewBox="0 0 18 17"><rect x="0.500" y="0.500" width="11" height="10.500" fill="#4a9be8" stroke="#2b7cd3" stroke-width="0.900"/><circle cx="11.200" cy="10.700" r="5.600" fill="#fff" stroke="#5a5856" stroke-width="0.900"/></svg>
<div class="t" style="top:149px;font-size:7.6px;line-height:7.6px;color:#4a4846;left:496.3px;transform-origin:0 0;transform:scaleX(0.863);-webkit-text-stroke:0.150px;">Şekiller</div>
<svg style="left:505.2px;top:161.05px" width="3.6" height="1.9" viewBox="0 0 3.6 1.9"><path d="M0.3 0.3L1.8 1.7L3.3 0.3" stroke="#605e5c" stroke-width="0.9" fill="none"/></svg>
<svg style="left:525px;top:128.8px" width="17.5" height="17.5" viewBox="0 0 17.5 17.5"><rect x="4" y="3.500" width="10" height="10.500" fill="#fbd38a" stroke="#e59a3c" stroke-width="0.900"/><rect x="0.500" y="0.500" width="6" height="6" fill="#fff" stroke="#5a5856" stroke-width="0.900"/><rect x="10.500" y="10.500" width="6" height="6" fill="#fff" stroke="#5a5856" stroke-width="0.900"/></svg>
<div class="t" style="top:149px;font-size:7.6px;line-height:7.6px;color:#4a4846;left:521px;transform-origin:0 0;transform:scaleX(0.902);-webkit-text-stroke:0.150px;">Yerleştir</div>
<svg style="left:531.4px;top:161.05px" width="3.6" height="1.9" viewBox="0 0 3.6 1.9"><path d="M0.3 0.3L1.8 1.7L3.3 0.3" stroke="#605e5c" stroke-width="0.9" fill="none"/></svg>
<svg style="left:552px;top:128.8px" width="18.5" height="17.5" viewBox="0 0 18.5 17.5"><rect x="0.500" y="0.500" width="16.500" height="15.500" fill="#f0efee" stroke="#c8c6c4" stroke-width="0.900"/><path d="M17 5L9 14.500L6 16L7 12.500L15.500 3.500Z" fill="#dddbd9" stroke="#b8b6b4" stroke-width="0.800"/></svg>
<div class="t" style="top:149px;font-size:7.6px;line-height:7.6px;color:#c2c0be;left:554.6px;transform-origin:0 0;transform:scaleX(0.836);">Hızlı</div>
<div class="t" style="top:158px;font-size:7.6px;line-height:7.6px;color:#c2c0be;left:548.8px;transform-origin:0 0;transform:scaleX(0.926);">Stiller</div>
<svg style="left:568.1px;top:161.45px" width="3.2" height="1.7" viewBox="0 0 3.2 1.7"><path d="M0.3 0.3L1.6 1.5L2.9 0.3" stroke="#c2c0be" stroke-width="0.9" fill="none"/></svg>
<svg style="left:577px;top:129px" width="8.5" height="9" viewBox="0 0 8.5 9"><path d="M3.500 0.500L6.500 3.500L3.800 6H1.800L1 4.500ZM0.300 8.500H8.200" fill="none" stroke="#b0aeac" stroke-width="0.800"/></svg>
<div class="t" style="top:129px;font-size:7.6px;line-height:7.6px;color:#b0aeac;left:587.5px;transform-origin:0 0;transform:scaleX(0.911);">Şekil Dolgusu</div>
<svg style="left:632.2px;top:132.75px" width="3.2" height="1.7" viewBox="0 0 3.2 1.7"><path d="M0.3 0.3L1.6 1.5L2.9 0.3" stroke="#b0aeac" stroke-width="0.9" fill="none"/></svg>
<svg style="left:577px;top:142px" width="8.5" height="9" viewBox="0 0 8.5 9"><rect x="0.500" y="1.500" width="6" height="5" fill="none" stroke="#b0aeac" stroke-width="0.800"/><path d="M8 0.500L3.500 5.500M0.300 8.500H8.200" fill="none" stroke="#b0aeac" stroke-width="0.800"/></svg>
<div class="t" style="top:142px;font-size:7.6px;line-height:7.6px;color:#b0aeac;left:587.5px;transform-origin:0 0;transform:scaleX(0.921);">Şekil Ana Hattı</div>
<svg style="left:635.4px;top:145.85px" width="3.2" height="1.7" viewBox="0 0 3.2 1.7"><path d="M0.3 0.3L1.6 1.5L2.9 0.3" stroke="#b0aeac" stroke-width="0.9" fill="none"/></svg>
<svg style="left:577px;top:156px" width="8.5" height="8" viewBox="0 0 8.5 8"><path d="M2.500 0.800H8L6 6.500H0.500Z" fill="none" stroke="#b0aeac" stroke-width="0.800"/><ellipse cx="4.300" cy="3.700" rx="2" ry="1.500" fill="none" stroke="#b0aeac" stroke-width="0.700"/></svg>
<div class="t" style="top:156px;font-size:7.6px;line-height:7.6px;color:#b0aeac;left:587.5px;transform-origin:0 0;transform:scaleX(0.900);">Şekil Efektleri</div>
<svg style="left:630.8px;top:159.45px" width="3.2" height="1.7" viewBox="0 0 3.2 1.7"><path d="M0.3 0.3L1.6 1.5L2.9 0.3" stroke="#b0aeac" stroke-width="0.9" fill="none"/></svg>
<div class="t" style="top:173px;font-size:7.4px;line-height:7.4px;color:#4a4846;left:556.6px;transform-origin:0 0;transform:scaleX(0.811);-webkit-text-stroke:0.150px;">Çizim</div>
<svg style="left:640px;top:174.3px" width="5" height="5" viewBox="0 0 5 5"><path d="M0.400 4V0.400H4M2 2L4.600 4.600M4.600 2.600V4.600H2.600" stroke="#b4b2b0" stroke-width="0.700" fill="none"/></svg>
<div class="a" style="left:646.5px;top:127px;width:1px;height:51.5px;background:#d2d0ce;"></div>
<svg style="left:654.5px;top:128.8px" width="9" height="9" viewBox="0 0 9 9"><circle cx="5.300" cy="3.700" r="3" fill="none" stroke="#4a4846" stroke-width="0.900"/><path d="M3.200 5.800L0.500 8.500" stroke="#4a4846" stroke-width="1"/></svg>
<div class="t" style="top:129px;font-size:7.6px;line-height:7.6px;color:#4a4846;left:665.6px;transform-origin:0 0;transform:scaleX(0.892);-webkit-text-stroke:0.150px;">Bul</div>
<svg style="left:654.5px;top:141.5px" width="9" height="10" viewBox="0 0 9 10"><path d="M1 5C0.500 2.500 2.500 1.500 4 2.300M3 0.800L4.200 2.400L2.600 3.400" stroke="#2b7cd3" stroke-width="0.800" fill="none"/><path d="M8 5.500C8.500 8 6.500 9 5 8.200M6 9.700L4.800 8.100L6.400 7.100" stroke="#2b7cd3" stroke-width="0.800" fill="none"/></svg><div class="t" style="top:141px;font-size:5px;line-height:5px;color:#a33fb5;font-weight:bold;left:659.5px;">b</div><div class="t" style="top:147px;font-size:5px;line-height:5px;color:#2b7cd3;font-weight:bold;left:661px;">c</div>
<div class="t" style="top:142px;font-size:7.6px;line-height:7.6px;color:#4a4846;left:665.6px;transform-origin:0 0;transform:scaleX(0.901);-webkit-text-stroke:0.150px;">Değiştir</div>
<svg style="left:695.5px;top:145.8px" width="3.4" height="1.8" viewBox="0 0 3.4 1.8"><path d="M0.3 0.3L1.7 1.6L3.1 0.3" stroke="#605e5c" stroke-width="0.9" fill="none"/></svg>
<svg style="left:655.5px;top:155.5px" width="7" height="9.5" viewBox="0 0 7 9.5"><path d="M0.500 0.500V7.800L2.500 6L3.800 9L5 8.500L3.700 5.600H6.200Z" fill="#fff" stroke="#4a4846" stroke-width="0.800"/></svg>
<div class="t" style="top:156px;font-size:7.6px;line-height:7.6px;color:#4a4846;left:665.6px;transform-origin:0 0;transform:scaleX(0.748);-webkit-text-stroke:0.150px;">Seç</div>
<svg style="left:677.9px;top:159.4px" width="3.4" height="1.8" viewBox="0 0 3.4 1.8"><path d="M0.3 0.3L1.7 1.6L3.1 0.3" stroke="#605e5c" stroke-width="0.9" fill="none"/></svg>
<div class="t" style="top:173px;font-size:7.4px;line-height:7.4px;color:#4a4846;left:660.7px;transform-origin:0 0;transform:scaleX(0.891);-webkit-text-stroke:0.150px;">Düzenleme</div>
<div class="a" style="left:706.5px;top:127px;width:1px;height:51.5px;background:#d2d0ce;"></div>
<svg style="left:719px;top:128px" width="11.5" height="18" viewBox="0 0 11.5 18"><rect x="3" y="0.500" width="5.500" height="10.500" rx="2.750" fill="#5aa2e8" stroke="#2b7cd3" stroke-width="0.800"/><path d="M0.700 8C0.700 14.500 10.800 14.500 10.800 8M5.750 13V17" fill="none" stroke="#5a5856" stroke-width="0.900"/></svg>
<div class="t" style="top:149px;font-size:7.6px;line-height:7.6px;color:#4a4846;left:716.75px;transform-origin:0 0;transform:scaleX(0.901);-webkit-text-stroke:0.150px;">Dikte</div>
<svg style="left:722.7px;top:161.05px" width="3.6" height="1.9" viewBox="0 0 3.6 1.9"><path d="M0.3 0.3L1.8 1.7L3.3 0.3" stroke="#605e5c" stroke-width="0.9" fill="none"/></svg>
<div class="t" style="top:173px;font-size:7.4px;line-height:7.4px;color:#4a4846;left:719.7px;transform-origin:0 0;transform:scaleX(0.729);-webkit-text-stroke:0.150px;">Ses</div>
<div class="a" style="left:741.2px;top:127px;width:1px;height:51.5px;background:#d2d0ce;"></div>
<svg style="left:750.4px;top:127.8px" width="18.5" height="16" viewBox="0 0 18.5 16"><rect x="1.500" y="4" width="16.500" height="11.500" fill="#eeedec" stroke="#c2c0be" stroke-width="0.900"/><path d="M3.500 9H16M11.500 9V13.500H16" stroke="#c8c6c4" stroke-width="0.800" fill="none"/><path d="M6 0L2.500 5H5L3.500 8.500L8.500 3.500H5.800L8 0Z" fill="#dad8d6" stroke="#b8b6b4" stroke-width="0.600"/></svg>
<div class="t" style="top:149px;font-size:7.6px;line-height:7.6px;color:#c2c0be;left:747.8px;transform-origin:0 0;transform:scaleX(0.881);">Tasarım</div>
<div class="t" style="top:158px;font-size:7.6px;line-height:7.6px;color:#c2c0be;left:749px;transform-origin:0 0;transform:scaleX(0.911);">Fikirleri</div>
<div class="t" style="top:172px;font-size:7.4px;line-height:7.4px;color:#4a4846;left:746px;transform-origin:0 0;transform:scaleX(0.874);-webkit-text-stroke:0.150px;">Tasarımcı</div>
<div class="a" style="left:778.1px;top:127px;width:1px;height:51.5px;background:#d2d0ce;"></div>
<svg style="left:799.5px;top:175px" width="6.5" height="4" viewBox="0 0 6.5 4"><path d="M0.400 3.600L3.250 0.600L6.100 3.600" stroke="#4a4846" stroke-width="0.900" fill="none"/></svg>
<!-- sec_work -->
<div class="a" style="left:0px;top:182px;width:811px;height:323px;background:#e6e6e6;"></div>
<div class="a" style="left:20.5px;top:182px;width:84px;height:3.2px;background:#dbdbdb;border:1px solid #ececec;border-top:0;"></div>
<div class="t" style="top:181px;font-size:2.2px;line-height:2.2px;color:#8a8a8a;font-family:'Liberation Serif',serif;left:62px;transform:translateX(-50%);">Oryantasyon Modülü</div>
<div class="a" style="left:20.5px;top:196.4px;width:84px;height:63px;background:#dbdbdb;border:1px solid #ececec;"></div><div class="a" style="left:27.3px;top:206.6px;width:70.5px;height:0.9px;background:#6488cc;"></div><svg style="left:96.1px;top:200.1px" width="5.2" height="6.6" viewBox="0 0 5.2 6.6"><ellipse cx="2.600" cy="3.300" rx="2.200" ry="2.900" fill="#e8eef8" stroke="#4a6fb8" stroke-width="0.900"/><path d="M2 2V4.200C2 5 3.300 5 3.300 4.200V1.800" stroke="#3f5fa8" stroke-width="0.600" fill="none"/></svg><div class="a" style="left:27.3px;top:251px;width:70.5px;height:0.9px;background:#6488cc;"></div><div class="t" style="top:252px;font-size:2.2px;line-height:2.2px;color:#8a8a8a;font-family:'Liberation Serif',serif;left:62px;transform:translateX(-50%);">Bartın Üniversitesi Uyumluluk ve</div><div class="t" style="top:255px;font-size:2.2px;line-height:2.2px;color:#8a8a8a;font-family:'Liberation Serif',serif;left:62px;transform:translateX(-50%);">Oryantasyon Modülü</div><div class="t" style="top:252px;font-size:2.2px;line-height:2.2px;color:#8a8a8a;font-family:'Liberation Serif',serif;left:96.5px;">2</div><div class="t" style="top:209px;font-size:4.3px;line-height:4.3px;color:#3c3c3c;font-family:'Liberation Serif',serif;left:34.5px;transform-origin:0 0;transform:scaleX(0.968);">Üniversitemiz Öğrenci Kulüpleri,</div><div class="t" style="top:218px;font-size:4.3px;line-height:4.3px;color:#3c3c3c;font-family:'Liberation Serif',serif;left:27.75px;transform-origin:0 0;transform:scaleX(0.969);">Sağlık Kültür ve Spor Daire Başkanlığına</div><div class="t" style="top:223px;font-size:4.3px;line-height:4.3px;color:#3c3c3c;font-family:'Liberation Serif',serif;left:55.25px;transform-origin:0 0;transform:scaleX(1.021);">bağlıdır.</div><div class="t" style="top:194px;font-size:9.5px;line-height:9.5px;color:#5a5856;left:7.2px;">2</div><svg style="left:7.1px;top:206.4px" width="5" height="5" viewBox="0 0 5 5"><path d="M2.500 0L3.200 1.800L5 1.900L3.600 3.100L4.100 5L2.500 3.900L0.900 5L1.400 3.100L0 1.900L1.800 1.800Z" fill="#5a5856"/></svg>
<div class="a" style="left:20.5px;top:271.2px;width:84px;height:63px;background:#dbdbdb;border:1px solid #ececec;"></div><div class="a" style="left:27.3px;top:281.4px;width:70.5px;height:0.9px;background:#6488cc;"></div><svg style="left:96.1px;top:274.9px" width="5.2" height="6.6" viewBox="0 0 5.2 6.6"><ellipse cx="2.600" cy="3.300" rx="2.200" ry="2.900" fill="#e8eef8" stroke="#4a6fb8" stroke-width="0.900"/><path d="M2 2V4.200C2 5 3.300 5 3.300 4.200V1.800" stroke="#3f5fa8" stroke-width="0.600" fill="none"/></svg><div class="a" style="left:27.3px;top:325.8px;width:70.5px;height:0.9px;background:#6488cc;"></div><div class="t" style="top:327px;font-size:2.2px;line-height:2.2px;color:#8a8a8a;font-family:'Liberation Serif',serif;left:62px;transform:translateX(-50%);">Bartın Üniversitesi Uyumluluk ve</div><div class="t" style="top:329px;font-size:2.2px;line-height:2.2px;color:#8a8a8a;font-family:'Liberation Serif',serif;left:62px;transform:translateX(-50%);">Oryantasyon Modülü</div><div class="t" style="top:327px;font-size:2.2px;line-height:2.2px;color:#8a8a8a;font-family:'Liberation Serif',serif;left:96.5px;">3</div><div class="t" style="top:284px;font-size:3.9px;line-height:3.9px;color:#3c3c3c;font-family:'Liberation Serif',serif;left:30.5px;transform-origin:0 0;transform:scaleX(0.934);">Üniversitemizdeki akademik yaşamı sosyal,</div><div class="t" style="top:290px;font-size:3.9px;line-height:3.9px;color:#3c3c3c;font-family:'Liberation Serif',serif;left:34.5px;transform-origin:0 0;transform:scaleX(0.927);">kültürel, sanatsal ve sportif alanlardaki</div><div class="t" style="top:295px;font-size:3.9px;line-height:3.9px;color:#3c3c3c;font-family:'Liberation Serif',serif;left:29.5px;transform-origin:0 0;transform:scaleX(0.917);">etkinlikleriyle yoğun bir biçimde renklendiren</div><div class="t" style="top:300px;font-size:3.9px;line-height:3.9px;color:#3c3c3c;font-family:'Liberation Serif',serif;left:30.5px;transform-origin:0 0;transform:scaleX(0.931);">Öğrenci kulüpleri, öğrencilerin ders dışı boş</div><div class="t" style="top:305px;font-size:3.9px;line-height:3.9px;color:#3c3c3c;font-family:'Liberation Serif',serif;left:29px;transform-origin:0 0;transform:scaleX(0.901);">zamanlarını keyifli hale getirir, kendilerine olan</div><div class="t" style="top:310px;font-size:3.9px;line-height:3.9px;color:#3c3c3c;font-family:'Liberation Serif',serif;left:31.5px;transform-origin:0 0;transform:scaleX(0.938);">özgüvenlerinin artmasına yardımcı olur ve</div><div class="t" style="top:316px;font-size:3.9px;line-height:3.9px;color:#3c3c3c;font-family:'Liberation Serif',serif;left:28.5px;transform-origin:0 0;transform:scaleX(0.751);">aralarındaki birliktelikleri, arkadaşlıklarını kuvvetlendiren</div><div class="t" style="top:321px;font-size:3.9px;line-height:3.9px;color:#3c3c3c;font-family:'Liberation Serif',serif;left:47.5px;transform-origin:0 0;transform:scaleX(0.938);">önemli bir rol oynar.</div><div class="t" style="top:269px;font-size:9.5px;line-height:9.5px;color:#5a5856;left:7.2px;">3</div><svg style="left:7.1px;top:281.2px" width="5" height="5" viewBox="0 0 5 5"><path d="M2.500 0L3.200 1.800L5 1.900L3.600 3.100L4.100 5L2.500 3.900L0.900 5L1.400 3.100L0 1.900L1.800 1.800Z" fill="#5a5856"/></svg>
<div class="a" style="left:17.7px;top:343.4px;width:89.6px;height:68.4px;background:#b5301d;border-radius:1px;"></div><div class="a" style="left:19.9px;top:345.5px;width:85.2px;height:64.2px;background:#eee;"></div><div class="a" style="left:20.5px;top:346px;width:84px;height:63px;background:#dbdbdb;"></div><div class="a" style="left:27.3px;top:356.2px;width:70.5px;height:0.9px;background:#6488cc;"></div><svg style="left:96.1px;top:349.7px" width="5.2" height="6.6" viewBox="0 0 5.2 6.6"><ellipse cx="2.600" cy="3.300" rx="2.200" ry="2.900" fill="#e8eef8" stroke="#4a6fb8" stroke-width="0.900"/><path d="M2 2V4.200C2 5 3.300 5 3.300 4.200V1.800" stroke="#3f5fa8" stroke-width="0.600" fill="none"/></svg><div class="a" style="left:27.3px;top:400.6px;width:70.5px;height:0.9px;background:#6488cc;"></div><div class="t" style="top:402px;font-size:2.2px;line-height:2.2px;color:#8a8a8a;font-family:'Liberation Serif',serif;left:62px;transform:translateX(-50%);">Bartın Üniversitesi Uyumluluk ve</div><div class="t" style="top:404px;font-size:2.2px;line-height:2.2px;color:#8a8a8a;font-family:'Liberation Serif',serif;left:62px;transform:translateX(-50%);">Oryantasyon Modülü</div><div class="t" style="top:402px;font-size:2.2px;line-height:2.2px;color:#8a8a8a;font-family:'Liberation Serif',serif;left:96.5px;">4</div><div class="t" style="top:359px;font-size:3.9px;line-height:3.9px;color:#3c3c3c;font-family:'Liberation Serif',serif;left:35.5px;transform-origin:0 0;transform:scaleX(0.914);">Üniversiteye girdiğiniz andan itibaren</div><div class="t" style="top:364px;font-size:3.9px;line-height:3.9px;color:#3c3c3c;font-family:'Liberation Serif',serif;left:27.5px;transform-origin:0 0;transform:scaleX(0.929);">yoğunlaşmak istediğiniz alana göre birçok farklı</div><div class="t" style="top:369px;font-size:3.9px;line-height:3.9px;color:#3c3c3c;font-family:'Liberation Serif',serif;left:28px;transform-origin:0 0;transform:scaleX(0.927);">öğrenci kulübü bulabilirsiniz. Öğrenci kulüpleri</div><div class="t" style="top:374px;font-size:3.9px;line-height:3.9px;color:#3c3c3c;font-family:'Liberation Serif',serif;left:29.5px;transform-origin:0 0;transform:scaleX(0.910);">hem sosyal hayat hem de iş hayatı bakımından</div><div class="t" style="top:379px;font-size:3.9px;line-height:3.9px;color:#3c3c3c;font-family:'Liberation Serif',serif;left:30.5px;transform-origin:0 0;transform:scaleX(0.911);">öğrenciler için oldukça önem taşır. Kendinizi</div><div class="t" style="top:385px;font-size:3.9px;line-height:3.9px;color:#3c3c3c;font-family:'Liberation Serif',serif;left:30.5px;transform-origin:0 0;transform:scaleX(0.908);">geliştirmek istediğiniz, ilgilenmek istediğiniz</div><div class="t" style="top:390px;font-size:3.9px;line-height:3.9px;color:#3c3c3c;font-family:'Liberation Serif',serif;left:27.25px;transform-origin:0 0;transform:scaleX(0.923);">alanlara yönelik alternatif kulüpler bulabilirsiniz.</div><div class="t" style="top:344px;font-size:9.5px;line-height:9.5px;color:#c43e1c;left:7.2px;">4</div><svg style="left:7.1px;top:356px" width="5" height="5" viewBox="0 0 5 5"><path d="M2.500 0L3.200 1.800L5 1.900L3.600 3.100L4.100 5L2.500 3.900L0.900 5L1.400 3.100L0 1.900L1.800 1.800Z" fill="#5a5856"/></svg>
<div class="a" style="left:20.5px;top:420.6px;width:84px;height:63px;background:#dbdbdb;border:1px solid #ececec;"></div><div class="a" style="left:27.3px;top:430.8px;width:70.5px;height:0.9px;background:#6488cc;"></div><svg style="left:96.1px;top:424.3px" width="5.2" height="6.6" viewBox="0 0 5.2 6.6"><ellipse cx="2.600" cy="3.300" rx="2.200" ry="2.900" fill="#e8eef8" stroke="#4a6fb8" stroke-width="0.900"/><path d="M2 2V4.200C2 5 3.300 5 3.300 4.200V1.800" stroke="#3f5fa8" stroke-width="0.600" fill="none"/></svg><div class="a" style="left:27.3px;top:475.2px;width:70.5px;height:0.9px;background:#6488cc;"></div><div class="t" style="top:476px;font-size:2.2px;line-height:2.2px;color:#8a8a8a;font-family:'Liberation Serif',serif;left:62px;transform:translateX(-50%);">Bartın Üniversitesi Uyumluluk ve</div><div class="t" style="top:479px;font-size:2.2px;line-height:2.2px;color:#8a8a8a;font-family:'Liberation Serif',serif;left:62px;transform:translateX(-50%);">Oryantasyon Modülü</div><div class="t" style="top:476px;font-size:2.2px;line-height:2.2px;color:#8a8a8a;font-family:'Liberation Serif',serif;left:96.5px;">5</div><div class="t" style="top:434px;font-size:4.6px;line-height:4.6px;color:#3c3c3c;font-family:'Liberation Serif',serif;left:35.5px;transform-origin:0 0;transform:scaleX(0.920);">Mesela, iş hayatına hazırlığınızı</div><div class="t" style="top:441px;font-size:4.6px;line-height:4.6px;color:#3c3c3c;font-family:'Liberation Serif',serif;left:32px;transform-origin:0 0;transform:scaleX(0.868);">üniversite hayatından itibaren yapmak</div><div class="t" style="top:447px;font-size:4.6px;line-height:4.6px;color:#3c3c3c;font-family:'Liberation Serif',serif;left:38.5px;transform-origin:0 0;transform:scaleX(0.844);">isterseniz, Kariyer Kulübü gibi</div><div class="t" style="top:454px;font-size:4.6px;line-height:4.6px;color:#3c3c3c;font-family:'Liberation Serif',serif;left:42.5px;transform-origin:0 0;transform:scaleX(0.857);">öğrenci kulüplerini tercih</div><div class="t" style="top:460px;font-size:4.6px;line-height:4.6px;color:#3c3c3c;font-family:'Liberation Serif',serif;left:51.5px;transform-origin:0 0;transform:scaleX(0.922);">edebilirsiniz.</div><div class="t" style="top:418px;font-size:9.5px;line-height:9.5px;color:#5a5856;left:7.2px;">5</div><svg style="left:7.1px;top:430.6px" width="5" height="5" viewBox="0 0 5 5"><path d="M2.500 0L3.200 1.800L5 1.900L3.600 3.100L4.100 5L2.500 3.900L0.900 5L1.400 3.100L0 1.900L1.800 1.800Z" fill="#5a5856"/></svg>
<div class="a" style="left:20.5px;top:495px;width:84px;height:10px;background:#dbdbdb;border:1px solid #ececec;border-bottom:0;"></div>
<svg style="left:96.1px;top:498.7px" width="5.2" height="6.6" viewBox="0 0 5.2 6.6"><ellipse cx="2.600" cy="3.300" rx="2.200" ry="2.900" fill="#e8eef8" stroke="#4a6fb8" stroke-width="0.900"/><path d="M2 2V4.200C2 5 3.300 5 3.300 4.200V1.800" stroke="#3f5fa8" stroke-width="0.600" fill="none"/></svg>
<div class="t" style="top:493px;font-size:9.5px;line-height:9.5px;color:#666;left:7.2px;">6</div>
<svg style="left:50.5px;top:390.5px" width="7" height="10.5" viewBox="0 0 7 10.5"><path d="M0.600 0.600V8.600L2.600 6.800L4 10L5.300 9.400L3.900 6.300H6.500Z" fill="#fff" stroke="#222" stroke-width="0.700"/></svg>
<div class="a" style="left:116px;top:182px;width:9.8px;height:323px;background:#d8d8d8;"></div>
<div class="a" style="left:116.3px;top:183.6px;width:8.8px;height:7.8px;background:#fdfdfd;border:1px solid #c8c8c8;"></div>
<svg style="left:118.7px;top:186.2px" width="4" height="2.5" viewBox="0 0 4 2.5"><path d="M0 2.500L2 0L4 2.500Z" fill="#555"/></svg>
<div class="a" style="left:116.5px;top:210.5px;width:8.5px;height:85.5px;background:#fdfdfd;border:1px solid #cecece;"></div>
<div class="a" style="left:116px;top:495.5px;width:8.5px;height:7.5px;background:#fdfdfd;border:1px solid #cfcfcf;"></div>
<svg style="left:118.3px;top:498.3px" width="4" height="2.5" viewBox="0 0 4 2.5"><path d="M0 0L2 2.500L4 0Z" fill="#555"/></svg>
<div class="a" style="left:127px;top:182px;width:1.2px;height:323px;background:#d2d2d2;"></div>
<div class="a" style="left:249px;top:184.6px;width:449.5px;height:7.4px;background:#fcfcfc;"></div>
<div class="t" style="top:186px;font-size:6.3px;line-height:6.3px;color:#4a4a4a;left:260.8px;transform:translateX(-50%);">12</div><div class="t" style="top:186px;font-size:6.3px;line-height:6.3px;color:#4a4a4a;left:278.5px;transform:translateX(-50%);">11</div><div class="t" style="top:186px;font-size:6.3px;line-height:6.3px;color:#4a4a4a;left:296.2px;transform:translateX(-50%);">10</div><div class="t" style="top:186px;font-size:6.3px;line-height:6.3px;color:#4a4a4a;left:313.9px;transform:translateX(-50%);">9</div><div class="t" style="top:186px;font-size:6.3px;line-height:6.3px;color:#4a4a4a;left:331.6px;transform:translateX(-50%);">8</div><div class="t" style="top:186px;font-size:6.3px;line-height:6.3px;color:#4a4a4a;left:349.3px;transform:translateX(-50%);">7</div><div class="t" style="top:186px;font-size:6.3px;line-height:6.3px;color:#4a4a4a;left:367px;transform:translateX(-50%);">6</div><div class="t" style="top:186px;font-size:6.3px;line-height:6.3px;color:#4a4a4a;left:384.7px;transform:translateX(-50%);">5</div><div class="t" style="top:186px;font-size:6.3px;line-height:6.3px;color:#4a4a4a;left:402.4px;transform:translateX(-50%);">4</div><div class="t" style="top:186px;font-size:6.3px;line-height:6.3px;color:#4a4a4a;left:420.1px;transform:translateX(-50%);">3</div><div class="t" style="top:186px;font-size:6.3px;line-height:6.3px;color:#4a4a4a;left:437.8px;transform:translateX(-50%);">2</div><div class="t" style="top:186px;font-size:6.3px;line-height:6.3px;color:#4a4a4a;left:455.5px;transform:translateX(-50%);">1</div><div class="t" style="top:186px;font-size:6.3px;line-height:6.3px;color:#4a4a4a;left:473.2px;transform:translateX(-50%);">0</div><div class="t" style="top:186px;font-size:6.3px;line-height:6.3px;color:#4a4a4a;left:490.9px;transform:translateX(-50%);">1</div><div class="t" style="top:186px;font-size:6.3px;line-height:6.3px;color:#4a4a4a;left:508.6px;transform:translateX(-50%);">2</div><div class="t" style="top:186px;font-size:6.3px;line-height:6.3px;color:#4a4a4a;left:526.3px;transform:translateX(-50%);">3</div><div class="t" style="top:186px;font-size:6.3px;line-height:6.3px;color:#4a4a4a;left:544px;transform:translateX(-50%);">4</div><div class="t" style="top:186px;font-size:6.3px;line-height:6.3px;color:#4a4a4a;left:561.7px;transform:translateX(-50%);">5</div><div class="t" style="top:186px;font-size:6.3px;line-height:6.3px;color:#4a4a4a;left:579.4px;transform:translateX(-50%);">6</div><div class="t" style="top:186px;font-size:6.3px;line-height:6.3px;color:#4a4a4a;left:597.1px;transform:translateX(-50%);">7</div><div class="t" style="top:186px;font-size:6.3px;line-height:6.3px;color:#4a4a4a;left:614.8px;transform:translateX(-50%);">8</div><div class="t" style="top:186px;font-size:6.3px;line-height:6.3px;color:#4a4a4a;left:632.5px;transform:translateX(-50%);">9</div><div class="t" style="top:186px;font-size:6.3px;line-height:6.3px;color:#4a4a4a;left:650.2px;transform:translateX(-50%);">10</div><div class="t" style="top:186px;font-size:6.3px;line-height:6.3px;color:#4a4a4a;left:667.9px;transform:translateX(-50%);">11</div><div class="t" style="top:186px;font-size:6.3px;line-height:6.3px;color:#4a4a4a;left:685.6px;transform:translateX(-50%);">12</div>
<svg style="left:249px;top:184.6px" width="449.5" height="7.4" viewBox="0 0 449.5 7.4"><path d="M2.95 2.200V5.400M7.02 3.400V4.300M16.58 3.400V4.300M20.65 2.200V5.400M24.72 3.400V4.300M34.28 3.400V4.300M38.35 2.200V5.400M42.42 3.400V4.300M51.98 3.400V4.300M56.05 2.200V5.400M60.12 3.400V4.300M69.68 3.400V4.300M73.75 2.200V5.400M77.82 3.400V4.300M87.38 3.400V4.300M91.45 2.200V5.400M95.52 3.400V4.300M105.08 3.400V4.300M109.15 2.200V5.400M113.22 3.400V4.300M122.78 3.400V4.300M126.85 2.200V5.400M130.92 3.400V4.300M140.48 3.400V4.300M144.55 2.200V5.400M148.62 3.400V4.300M158.18 3.400V4.300M162.25 2.200V5.400M166.32 3.400V4.300M175.88 3.400V4.300M179.95 2.200V5.400M184.02 3.400V4.300M193.58 3.400V4.300M197.65 2.200V5.400M201.72 3.400V4.300M211.28 3.400V4.300M215.35 2.200V5.400M219.42 3.400V4.300M228.98 3.400V4.300M233.05 2.200V5.400M237.12 3.400V4.300M246.68 3.400V4.300M250.75 2.200V5.400M254.82 3.400V4.300M264.38 3.400V4.300M268.45 2.200V5.400M272.52 3.400V4.300M282.08 3.400V4.300M286.15 2.200V5.400M290.22 3.400V4.300M299.78 3.400V4.300M303.85 2.200V5.400M307.92 3.400V4.300M317.48 3.400V4.300M321.55 2.200V5.400M325.62 3.400V4.300M335.18 3.400V4.300M339.25 2.200V5.400M343.32 3.400V4.300M352.88 3.400V4.300M356.95 2.200V5.400M361.02 3.400V4.300M370.58 3.400V4.300M374.65 2.200V5.400M378.72 3.400V4.300M388.28 3.400V4.300M392.35 2.200V5.400M396.42 3.400V4.300M405.98 3.400V4.300M410.05 2.200V5.400M414.12 3.400V4.300M423.68 3.400V4.300M427.75 2.200V5.400M431.82 3.400V4.300M441.38 3.400V4.300M445.45 2.200V5.400" stroke="#6a6a6a" stroke-width="0.700" fill="none"/></svg>
<div class="a" style="left:133px;top:198.1px;width:6.7px;height:284.5px;background:#fcfcfc;"></div>
<div class="t" style="left:136.300px;top:216.4px;font-size:6.300px;line-height:6.300px;color:#4a4a4a;transform:translate(-50%,-50%) rotate(-90deg)">8</div><div class="t" style="left:136.300px;top:234.05px;font-size:6.300px;line-height:6.300px;color:#4a4a4a;transform:translate(-50%,-50%) rotate(-90deg)">7</div><div class="t" style="left:136.300px;top:251.7px;font-size:6.300px;line-height:6.300px;color:#4a4a4a;transform:translate(-50%,-50%) rotate(-90deg)">6</div><div class="t" style="left:136.300px;top:269.35px;font-size:6.300px;line-height:6.300px;color:#4a4a4a;transform:translate(-50%,-50%) rotate(-90deg)">5</div><div class="t" style="left:136.300px;top:287px;font-size:6.300px;line-height:6.300px;color:#4a4a4a;transform:translate(-50%,-50%) rotate(-90deg)">4</div><div class="t" style="left:136.300px;top:304.65px;font-size:6.300px;line-height:6.300px;color:#4a4a4a;transform:translate(-50%,-50%) rotate(-90deg)">3</div><div class="t" style="left:136.300px;top:322.3px;font-size:6.300px;line-height:6.300px;color:#4a4a4a;transform:translate(-50%,-50%) rotate(-90deg)">2</div><div class="t" style="left:136.300px;top:339.95px;font-size:6.300px;line-height:6.300px;color:#4a4a4a;transform:translate(-50%,-50%) rotate(-90deg)">1</div><div class="t" style="left:136.300px;top:357.6px;font-size:6.300px;line-height:6.300px;color:#4a4a4a;transform:translate(-50%,-50%) rotate(-90deg)">0</div><div class="t" style="left:136.300px;top:375.25px;font-size:6.300px;line-height:6.300px;color:#4a4a4a;transform:translate(-50%,-50%) rotate(-90deg)">1</div><div class="t" style="left:136.300px;top:392.9px;font-size:6.300px;line-height:6.300px;color:#4a4a4a;transform:translate(-50%,-50%) rotate(-90deg)">2</div><div class="t" style="left:136.300px;top:410.55px;font-size:6.300px;line-height:6.300px;color:#4a4a4a;transform:translate(-50%,-50%) rotate(-90deg)">3</div><div class="t" style="left:136.300px;top:428.2px;font-size:6.300px;line-height:6.300px;color:#4a4a4a;transform:translate(-50%,-50%) rotate(-90deg)">4</div><div class="t" style="left:136.300px;top:445.85px;font-size:6.300px;line-height:6.300px;color:#4a4a4a;transform:translate(-50%,-50%) rotate(-90deg)">5</div><div class="t" style="left:136.300px;top:463.5px;font-size:6.300px;line-height:6.300px;color:#4a4a4a;transform:translate(-50%,-50%) rotate(-90deg)">6</div>
<svg style="left:133px;top:198.6px" width="6.7" height="284" viewBox="0 0 6.7 284"><path d="M3 4.92H3.900M1.800 8.98H5M3 13.03H3.900M3 22.57H3.900M1.800 26.63H5M3 30.68H3.900M3 40.22H3.900M1.800 44.28H5M3 48.33H3.900M3 57.87H3.900M1.800 61.93H5M3 65.98H3.900M3 75.52H3.900M1.800 79.58H5M3 83.63H3.900M3 93.17H3.900M1.800 97.23H5M3 101.28H3.900M3 110.82H3.900M1.800 114.88H5M3 118.93H3.900M3 128.47H3.900M1.800 132.53H5M3 136.58H3.900M3 146.12H3.900M1.800 150.18H5M3 154.23H3.900M3 163.77H3.900M1.800 167.83H5M3 171.88H3.900M3 181.42H3.900M1.800 185.47H5M3 189.53H3.900M3 199.07H3.900M1.800 203.13H5M3 207.18H3.900M3 216.72H3.900M1.800 220.78H5M3 224.83H3.900M3 234.37H3.900M1.800 238.43H5M3 242.48H3.900M3 252.02H3.900M1.800 256.08H5M3 260.13H3.900M3 269.67H3.900M1.800 273.72H5M3 277.78H3.900" stroke="#6a6a6a" stroke-width="0.700" fill="none"/></svg>
<div class="a" style="left:247.5px;top:197.6px;width:451.4px;height:287px;background:#dcdcdc;border:1px solid #e2e2e2;border-bottom:0;"></div>
<div class="a" style="left:277.6px;top:242.6px;width:390px;height:1.3px;background:#4a74c4;"></div>
<svg style="left:656.5px;top:201.5px" width="32" height="40.5" viewBox="0 0 32 40.5"><defs><path id="lgarc" d="M4.200 22C2.500 -2 29.500 -2 27.800 22"/></defs>
<ellipse cx="16" cy="20.250" rx="15.400" ry="19.800" fill="#4068b2"/>
<ellipse cx="16" cy="19.300" rx="11.300" ry="15.200" fill="#fdfdff" stroke="#8fc4ea" stroke-width="0.800"/>
<text font-family="'Liberation Sans',sans-serif" font-size="2.900" font-weight="bold" fill="#e8eefa" letter-spacing="0.350"><textPath href="#lgarc" startOffset="5">BARTIN ÜNİVERSİTESİ</textPath></text>
<text x="16" y="38.300" text-anchor="middle" font-family="'Liberation Sans',sans-serif" font-size="2.600" font-weight="bold" fill="#e8eefa">2008</text>
<path d="M8.600 14.200L12 12.400V28C12 32.300 17.700 32.300 17.700 28V9.600L21.300 7.700V28.500C21.300 36.300 8.600 36.300 8.600 28.500Z" fill="#3c5aa2"/>
<path d="M12.400 12.200L14.700 10.900V22.600L12.400 23.600Z" fill="#38a6e2"/><path d="M15 10.600L17.300 9.300V21.200L15 22.300Z" fill="#38a6e2"/>
<path d="M17.700 22C13.500 22 12.800 26 14.800 27.600" stroke="#3c5aa2" stroke-width="1.500" fill="none"/></svg>
<div class="t" style="top:255px;font-size:21.2px;line-height:21.2px;color:#161616;font-family:'Liberation Serif',serif;left:321.05px;transform-origin:0 0;transform:scaleX(0.946);-webkit-text-stroke:0.250px #161616;">Üniversiteye girdiğiniz andan itibaren</div>
<div class="t" style="top:283px;font-size:21.2px;line-height:21.2px;color:#161616;font-family:'Liberation Serif',serif;left:277.55px;transform-origin:0 0;transform:scaleX(0.955);-webkit-text-stroke:0.250px #161616;">yoğunlaşmak istediğiniz alana göre birçok farklı</div>
<div class="t" style="top:310px;font-size:21.2px;line-height:21.2px;color:#161616;font-family:'Liberation Serif',serif;left:281.3px;transform-origin:0 0;transform:scaleX(0.947);-webkit-text-stroke:0.250px #161616;">öğrenci kulübü bulabilirsiniz. Öğrenci kulüpleri</div>
<div class="t" style="top:338px;font-size:21.2px;line-height:21.2px;color:#161616;font-family:'Liberation Serif',serif;left:285.8px;transform-origin:0 0;transform:scaleX(0.950);-webkit-text-stroke:0.250px #161616;">hem sosyal hayat hem de iş hayatı bakımından</div>
<div class="t" style="top:366px;font-size:21.2px;line-height:21.2px;color:#161616;font-family:'Liberation Serif',serif;left:293.3px;transform-origin:0 0;transform:scaleX(0.941);-webkit-text-stroke:0.250px #161616;">öğrenciler için oldukça önem taşır. Kendinizi</div>
<div class="t" style="top:393px;font-size:21.2px;line-height:21.2px;color:#161616;font-family:'Liberation Serif',serif;left:291.8px;transform-origin:0 0;transform:scaleX(0.946);-webkit-text-stroke:0.250px #161616;">geliştirmek istediğiniz, ilgilenmek istediğiniz</div>
<div class="t" style="top:421px;font-size:21.2px;line-height:21.2px;color:#161616;font-family:'Liberation Serif',serif;left:276.3px;transform-origin:0 0;transform:scaleX(0.947);-webkit-text-stroke:0.250px #161616;">alanlara yönelik alternatif kulüpler bulabilirsiniz.</div>
<div class="a" style="left:801px;top:182px;width:9.5px;height:269.5px;background:#dadada;"></div>
<div class="a" style="left:801.3px;top:183.3px;width:8.7px;height:7.7px;background:#fdfdfd;border:1px solid #cfcfcf;"></div>
<svg style="left:803.7px;top:185.8px" width="4" height="2.5" viewBox="0 0 4 2.5"><path d="M0 2.500L2 0L4 2.500Z" fill="#555"/></svg>
<div class="a" style="left:801.5px;top:243px;width:8.5px;height:12px;background:#fdfdfd;border:1px solid #d4d4d4;"></div>
<div class="a" style="left:801.3px;top:443.3px;width:8.7px;height:7.7px;background:#fdfdfd;border:1px solid #cfcfcf;"></div>
<svg style="left:803.7px;top:446px" width="4" height="2.5" viewBox="0 0 4 2.5"><path d="M0 0L2 2.500L4 0Z" fill="#555"/></svg>
<svg style="left:803.7px;top:454.2px" width="4" height="5" viewBox="0 0 4 5"><path d="M0 2.200L2 0L4 2.200ZM0 5L2 2.800L4 5Z" fill="#555"/></svg>
<svg style="left:803.7px;top:464px" width="4" height="5" viewBox="0 0 4 5"><path d="M0 0L2 2.200L4 0ZM0 2.800L2 5L4 2.800Z" fill="#555"/></svg>
<div class="a" style="left:128.2px;top:484px;width:682.3px;height:21px;background:#e9e9e9;"></div>
<div class="a" style="left:128.2px;top:484px;width:682.3px;height:1px;background:#d0d0d0;"></div>
<div class="t" style="top:490px;font-size:9.5px;line-height:9.5px;color:#555;left:135px;transform-origin:0 0;transform:scaleX(0.918);">Not eklemek için tıklayın</div>
<div class="a" style="left:0px;top:505px;width:811px;height:8px;background:#f3f2f1;"></div>
<div class="a" style="left:0px;top:504.6px;width:811px;height:0.8px;background:#d8d6d4;"></div>
<div class="t" style="top:507px;font-size:7.5px;line-height:7.5px;color:#5a5856;left:4.5px;transform-origin:0 0;transform:scaleX(0.879);">Slayt 4 / 15</div>
<svg style="left:48.7px;top:506.8px" width="7.5" height="7" viewBox="0 0 7.5 7"><path d="M0.400 0.800C1.500 0.300 2.800 0.300 3.750 1C4.700 0.300 6 0.300 7.100 0.800V6.200C6 5.700 4.700 5.700 3.750 6.400C2.800 5.700 1.500 5.700 0.400 6.200ZM3.750 1V6.400" fill="none" stroke="#5a5856" stroke-width="0.700"/></svg>
<svg style="left:68px;top:506.3px" width="7.5" height="8" viewBox="0 0 7.5 8"><circle cx="3.750" cy="1.300" r="1" fill="none" stroke="#5a5856" stroke-width="0.700"/><path d="M0.500 3H7M3.750 3V5.500M3.750 5.500L2 8M3.750 5.500L5.500 8" fill="none" stroke="#5a5856" stroke-width="0.700"/></svg>
<div class="t" style="top:507px;font-size:7.5px;line-height:7.5px;color:#5a5856;left:78.7px;transform-origin:0 0;transform:scaleX(0.896);">Erişilebilirlik: Kullanılamaz</div>
<svg style="left:553.7px;top:506.5px" width="8.8" height="7" viewBox="0 0 8.8 7"><path d="M0 4.500H8.800M0 6.500H8.800M2.700 3L4.400 1L6.100 3" fill="none" stroke="#5a5856" stroke-width="0.700"/></svg>
<div class="t" style="top:507px;font-size:7.5px;line-height:7.5px;color:#5a5856;left:564px;transform-origin:0 0;transform:scaleX(0.939);">Notlar</div>
<div class="a" style="left:595px;top:505.4px;width:23px;height:8px;background:#d6d4d2;"></div>
<svg style="left:603px;top:507px" width="9" height="7" viewBox="0 0 9 7"><rect x="0.400" y="0.400" width="8.200" height="6.200" fill="none" stroke="#5a5856" stroke-width="0.700"/><path d="M2.800 0.400V6.600M0.400 2H2.800M0.400 3.800H2.800" stroke="#5a5856" stroke-width="0.600"/></svg>
<svg style="left:626.5px;top:507px" width="8.5" height="7" viewBox="0 0 8.5 7"><path d="M0.400 0.400H3.400V2.800H0.400ZM5 0.400H8V2.800H5ZM0.400 4.200H3.400V6.600H0.400ZM5 4.200H8V6.600H5Z" fill="none" stroke="#5a5856" stroke-width="0.700"/></svg>
<svg style="left:649px;top:507px" width="8.5" height="7" viewBox="0 0 8.5 7"><rect x="0.400" y="0.400" width="7.700" height="5" fill="none" stroke="#5a5856" stroke-width="0.700"/><path d="M2.500 0.400V5.400M5.500 0.400V5.400" stroke="#5a5856" stroke-width="0.600"/></svg>
<svg style="left:673.5px;top:506.5px" width="8.5" height="7" viewBox="0 0 8.5 7"><path d="M0 0.500H8.500M0.800 0.500V4.800H7.700V0.500M4.250 4.800V7" fill="none" stroke="#5a5856" stroke-width="0.700"/></svg>
<div class="a" style="left:693px;top:510.3px;width:4px;height:0.7px;background:#5a5856;"></div>
<div class="a" style="left:701.5px;top:510.3px;width:57.5px;height:0.7px;background:#8a8886;"></div>
<div class="a" style="left:723.6px;top:507.3px;width:1.7px;height:6px;background:#5a5856;"></div>
<div class="a" style="left:730px;top:508.8px;width:0.7px;height:3px;background:#8a8886;"></div>
<svg style="left:763.5px;top:508.5px" width="4.3" height="4.3" viewBox="0 0 4.3 4.3"><path d="M0 2.150H4.300M2.150 0V4.300" stroke="#5a5856" stroke-width="0.700"/></svg>
<div class="t" style="top:506px;font-size:7px;line-height:7px;color:#5a5856;left:775px;transform-origin:0 0;transform:scaleX(0.892);">%80</div>
<svg style="left:799px;top:506.5px" width="8" height="7" viewBox="0 0 8 7"><rect x="2" y="2" width="4" height="4" fill="none" stroke="#5a5856" stroke-width="0.700"/><path d="M4 0V1.500M3 0.800L4 0L5 0.800M0 4H1.500M0.800 3L0 4L0.800 5M8 4H6.500M7.200 3L8 4L7.200 5" fill="none" stroke="#5a5856" stroke-width="0.600"/></svg>
<!-- sec_bottom -->
<div class="a" style="left:0px;top:513px;width:811px;height:35px;background:#1a1a1a;"></div>
<svg style="left:25px;top:517.5px" width="12" height="15.5" viewBox="0 0 12 15.5"><rect x="3.500" y="0.300" width="5" height="9.400" rx="2.500" fill="#c8c8c8"/><path d="M1 6.800C1 13 11 13 11 6.800M6 11.500V14.500M3.300 14.700H8.700" stroke="#c8c8c8" stroke-width="1.100" fill="none"/></svg>
<div class="t" style="top:537px;font-size:8.5px;line-height:8.5px;color:#dcdcdc;left:13.7px;transform-origin:0 0;transform:scaleX(0.872);-webkit-text-stroke:0.150px;">Sessize al</div>
<svg style="left:49px;top:523px" width="5" height="3" viewBox="0 0 5 3"><path d="M0.400 2.700L2.500 0.500L4.600 2.700" stroke="#cfcfcf" stroke-width="0.900" fill="none"/></svg>
<svg style="left:86px;top:518.5px" width="18" height="14" viewBox="0 0 18 14"><rect x="0.500" y="3" width="11.500" height="8.500" rx="1.500" fill="#c8c8c8"/><path d="M12.500 6L17 3.300V11.200L12.500 8.500Z" fill="#c8c8c8"/><path d="M16.500 0.500L1 13.500" stroke="#e0413a" stroke-width="1.200"/></svg>
<div class="t" style="top:537px;font-size:8.5px;line-height:8.5px;color:#dcdcdc;left:68.7px;transform-origin:0 0;transform:scaleX(0.951);-webkit-text-stroke:0.150px;">Videoyu Başlat</div>
<svg style="left:119px;top:523px" width="5" height="3" viewBox="0 0 5 3"><path d="M0.400 2.700L2.500 0.500L4.600 2.700" stroke="#cfcfcf" stroke-width="0.900" fill="none"/></svg>
<svg style="left:285.5px;top:518.5px" width="17" height="12" viewBox="0 0 17 12"><circle cx="5.800" cy="3.300" r="2.900" fill="#c8c8c8"/><path d="M0.500 11.500C0.500 5.800 11 5.800 11 11.500Z" fill="#c8c8c8"/><circle cx="12.300" cy="4" r="2.300" fill="#c8c8c8"/><path d="M12 11.500C12 9 11.500 8 10.800 7.200C13.500 6.200 16.500 7.500 16.500 11.500Z" fill="#c8c8c8"/></svg>
<div class="t" style="top:520px;font-size:7.5px;line-height:7.5px;color:#dcdcdc;left:305px;transform-origin:0 0;transform:scaleX(0.899);-webkit-text-stroke:0.150px;">18</div>
<div class="t" style="top:537px;font-size:8.5px;line-height:8.5px;color:#dcdcdc;left:273.4px;transform-origin:0 0;transform:scaleX(0.955);-webkit-text-stroke:0.150px;">Katılımcılar</div>
<svg style="left:326.2px;top:523px" width="5" height="3" viewBox="0 0 5 3"><path d="M0.400 2.700L2.500 0.500L4.600 2.700" stroke="#cfcfcf" stroke-width="0.900" fill="none"/></svg>
<svg style="left:357px;top:519.5px" width="14" height="12.5" viewBox="0 0 14 12.5"><path d="M1.500 0.500H12.500C13.200 0.500 13.500 1 13.500 1.500V7.500C13.500 8.200 13 8.500 12.500 8.500H6L2.800 11.800V8.500H1.500C0.800 8.500 0.500 8 0.500 7.500V1.500C0.500 0.800 1 0.500 1.500 0.500Z" fill="#c8c8c8"/></svg>
<div class="a" style="left:367px;top:516px;width:10.5px;height:8.6px;background:#e5383b;border-radius:2.500px;"></div>
<div class="t" style="top:516px;font-size:7px;line-height:7px;color:#fff;font-weight:bold;left:372.2px;transform:translateX(-50%);">2</div>
<div class="t" style="top:537px;font-size:8.5px;line-height:8.5px;color:#dcdcdc;left:351.5px;transform-origin:0 0;transform:scaleX(0.965);-webkit-text-stroke:0.150px;">Sohbet</div>
<div class="a" style="left:416.5px;top:519px;width:16.3px;height:11.6px;background:#23d05a;border-radius:2.500px;"></div>
<svg style="left:421.6px;top:521.5px" width="6" height="6.5" viewBox="0 0 6 6.5"><path d="M3 6.500V1M0.600 3L3 0.600L5.400 3" stroke="#12331c" stroke-width="1.300" fill="none"/></svg>
<div class="t" style="top:537px;font-size:8.5px;line-height:8.5px;color:#2fe06a;left:396px;transform-origin:0 0;transform:scaleX(0.932);">Ekran Paylaşımı</div>
<svg style="left:478.5px;top:518.2px" width="13" height="13" viewBox="0 0 13 13"><circle cx="6.500" cy="6.500" r="5.800" fill="none" stroke="#c8c8c8" stroke-width="1.100"/><circle cx="6.500" cy="6.500" r="3.700" fill="#d0d0d0"/></svg>
<div class="t" style="top:537px;font-size:8.5px;line-height:8.5px;color:#dcdcdc;left:472.8px;transform-origin:0 0;transform:scaleX(0.933);-webkit-text-stroke:0.150px;">Kaydet</div>
<svg style="left:532.5px;top:518px" width="14" height="13" viewBox="0 0 14 13"><circle cx="6" cy="7" r="5.500" fill="#c8c8c8"/><circle cx="4.200" cy="6" r="0.800" fill="#1a1a1a"/><circle cx="7.800" cy="6" r="0.800" fill="#1a1a1a"/><path d="M3.500 8.300C4.500 10.300 7.500 10.300 8.500 8.300Z" fill="#1a1a1a"/><path d="M11.800 0.300V4.300M9.800 2.300H13.800" stroke="#c8c8c8" stroke-width="1"/></svg>
<div class="t" style="top:537px;font-size:8.5px;line-height:8.5px;color:#dcdcdc;left:524.4px;transform-origin:0 0;transform:scaleX(0.976);-webkit-text-stroke:0.150px;">Tepkiler</div>
<svg style="left:588.5px;top:519px" width="11.5" height="11.5" viewBox="0 0 11.5 11.5"><path d="M4 0.600H2.500C1.400 0.600 0.600 1.400 0.600 2.500V4M7.500 0.600H7M0.600 7.500V9C0.600 10.100 1.400 10.900 2.500 10.900H4M7.500 10.900H9C10.100 10.900 10.900 10.100 10.900 9V7.500" stroke="#c8c8c8" stroke-width="1.100" fill="none"/><circle cx="9.200" cy="2.300" r="1.500" fill="none" stroke="#c8c8c8" stroke-width="1"/><circle cx="2.400" cy="9.100" r="0.100" fill="#c8c8c8"/></svg>
<div class="t" style="top:537px;font-size:8.5px;line-height:8.5px;color:#dcdcdc;left:570.3px;transform-origin:0 0;transform:scaleX(0.995);-webkit-text-stroke:0.150px;">Uygulamalar</div>
<div class="a" style="left:762px;top:522px;width:41.3px;height:17.7px;background:#c4282d;border-radius:4px;"></div>
<div class="t" style="top:526px;font-size:8.5px;line-height:8.5px;color:#fff;font-weight:bold;left:776.95px;transform-origin:0 0;transform:scaleX(0.869);">Çık</div>
<div class="a" style="left:0;top:548px;width:1024px;height:27px;background:linear-gradient(90deg,#d3e4ed 0%,#d9e7ee 50%,#e0ebf0 100%)"></div>
<svg style="left:10.5px;top:556.5px" width="10.5" height="10.5" viewBox="0 0 10.5 10.5"><path d="M0 0H4.800V4.800H0ZM5.700 0H10.500V4.800H5.700ZM0 5.700H4.800V10.500H0ZM5.700 5.700H10.500V10.500H5.700Z" fill="#111"/></svg>
<div class="a" style="left:32.5px;top:549.3px;width:228.5px;height:25.7px;background:#fff;border:1px solid #cfd8dd;border-bottom:0;"></div>
<svg style="left:40.5px;top:556.5px" width="10" height="10" viewBox="0 0 10 10"><circle cx="6" cy="4" r="3.300" fill="none" stroke="#222" stroke-width="0.900"/><path d="M3.700 6.300L0.500 9.500" stroke="#222" stroke-width="1"/></svg>
<div class="t" style="top:556px;font-size:10.5px;line-height:10.5px;color:#3c3c3c;left:58.7px;transform-origin:0 0;transform:scaleX(0.953);">Aramak için buraya yazın</div>
<svg style="left:271px;top:555.5px" width="12" height="12" viewBox="0 0 12 12"><rect x="1.500" y="3.500" width="6.500" height="5" fill="none" stroke="#333" stroke-width="0.900"/><path d="M1 1.200H8.500M1 10.800H8.500M10.500 3.500V10.800M10.500 1V2" stroke="#333" stroke-width="0.900"/></svg>
<svg style="left:304.5px;top:554.5px" width="14" height="14" viewBox="0 0 14 14"><circle cx="7" cy="7" r="6.500" fill="#e33b2e"/><path d="M7 7L1.400 3.800A6.500 6.500 0 0 0 4 12.800Z" fill="#2da94f"/><path d="M7 7L4 12.800A6.500 6.500 0 0 0 13.500 7Z" fill="#fcc31e"/><path d="M7 7H13.500A6.500 6.500 0 0 0 12.600 3.700Z" fill="#e33b2e"/><circle cx="7" cy="7" r="3" fill="#fff"/><circle cx="7" cy="7" r="2.300" fill="#3f7fe8"/></svg>
<svg style="left:337px;top:555.5px" width="14" height="12" viewBox="0 0 14 12"><path d="M0.500 1.500H5L6.500 3H13.500V11.500H0.500Z" fill="#f6c13f"/><path d="M0.500 4.500H13.500V11.500H0.500Z" fill="#fbd768"/><rect x="3.500" y="7.500" width="7" height="4" fill="#3f8fd8"/></svg>
<svg style="left:369px;top:553.5px" width="17" height="15.5" viewBox="0 0 15 12"><path d="M0.500 4.500L7.500 0.500L14.500 4.500V11.500H0.500Z" fill="#1976d2"/><path d="M0.500 4.500L7.500 8.500L14.500 4.500V11.500H0.500Z" fill="#3d9bf0"/><path d="M2 3.500H13V6L7.500 9L2 6Z" fill="#e8f1fb"/></svg>
<svg style="left:403.5px;top:553.8px" width="15" height="15" viewBox="0 0 15 15"><circle cx="7.500" cy="7.500" r="6.800" fill="#fff" stroke="#222" stroke-width="1.300"/></svg><div class="t" style="top:561px;font-size:4.8px;line-height:4.8px;color:#111;font-weight:bold;left:405.5px;transform-origin:0 0;transform:scaleX(0.878);">DELL</div>
<svg style="left:436.5px;top:555.5px" width="15" height="12" viewBox="0 0 15 12"><path d="M0.500 2.500H4L5 0.800H10L11 2.500H14.500V11.500H0.500Z" fill="#7b8792"/><circle cx="7.500" cy="6.800" r="3.300" fill="#c8d3dc"/><circle cx="7.500" cy="6.800" r="2" fill="#6a86b8"/></svg>
<svg style="left:469.8px;top:553.8px" width="12.5" height="15.5" viewBox="0 0 11 14"><path d="M7 0.500L10.500 1.500V12.500L7 13.500L0.800 11.200V10.800L7 11.400V2.800L3.200 3.900V9.600L0.800 10.800V3Z" fill="#e2401c"/></svg>
<svg style="left:501px;top:553px" width="17" height="17" viewBox="0 0 14 14"><circle cx="7" cy="7" r="6.500" fill="#1b8fd6"/><path d="M1 9.500C0 4 5 0.500 9.500 1.200C12.500 2 13.800 4.800 13.300 7H6.500C6.500 5.500 8 4.800 9 5C6 3.500 2 5.500 1 9.500Z" fill="#3fd0c0"/><path d="M6.500 7C6 10 8.500 12.800 12 11.500C10 14 5 14.200 2.500 11C3 12 6.500 11.500 6.500 7Z" fill="#0b5da8"/></svg>
<svg style="left:537px;top:554.5px" width="14" height="14" viewBox="0 0 14 14"><circle cx="6.500" cy="6.500" r="6" fill="#2bb741"/><path d="M1 12.800L2 9.500L4 11.500Z" fill="#2bb741"/><path d="M4.300 3.800C4 6.500 6.500 9 9.200 8.700L9.400 7.600L8 7L7.400 7.600C6.500 7.200 5.800 6.500 5.400 5.600L6 5L5.400 3.600Z" fill="#fff"/><circle cx="10.500" cy="10.500" r="4" fill="#e0302a"/></svg><div class="t" style="top:561px;font-size:7px;line-height:7px;color:#fff;font-weight:bold;left:547.5px;transform:translateX(-50%);">3</div>
<svg style="left:569.3px;top:553.5px" width="12.5" height="16" viewBox="0 0 11 14"><rect x="0.500" y="0.500" width="10" height="13" rx="0.800" fill="#4a5560"/><rect x="2" y="2" width="7" height="3" fill="#bfe3f5"/><path d="M2 6.500H3.800V8H2ZM4.600 6.500H6.400V8H4.600ZM7.200 6.500H9V8H7.200ZM2 9H3.800V10.500H2ZM4.600 9H6.400V10.500H4.600ZM7.200 9H9V12.500H7.200ZM2 11.200H6.400V12.500H2Z" fill="#e8edf0"/></svg>
<svg style="left:601.8px;top:553.3px" width="14.5" height="16" viewBox="0 0 13 14"><path d="M0.500 0.800L6.500 3.500L12.500 0.800V10L6.500 13.500L0.500 10Z" fill="#c01818"/><path d="M3.300 4.800L6.500 6.300L9.700 4.800V9L6.500 10.800L3.300 9Z" fill="#dfe9ef"/></svg>
<div class="a" style="left:626.5px;top:548.5px;width:29.5px;height:26.5px;background:#eaf3f7;"></div>
<svg style="left:634px;top:554px" width="15" height="15" viewBox="0 0 15 15"><rect width="15" height="15" rx="4" fill="#3c8cf5"/><rect x="3" y="4.800" width="6.300" height="5.400" rx="1.200" fill="#fff"/><path d="M9.800 7L12.300 5.200V9.800L9.800 8Z" fill="#fff"/></svg>
<svg style="left:667.5px;top:554.5px" width="15" height="14" viewBox="0 0 15 14"><path d="M2 11C-1 6 4 1 9 3.500C13 5.500 11 9 8.500 8.500C7 8.300 6.500 10 7.500 11C8.500 12.500 4 13.500 2 11Z" fill="#e9d9b8" stroke="#9aa7b0" stroke-width="0.500"/><circle cx="4" cy="6.500" r="1" fill="#e0302a"/><circle cx="6.500" cy="4.800" r="1" fill="#2da94f"/><circle cx="3.800" cy="9.500" r="1" fill="#3f7fe8"/><path d="M14 0.500L8 8.500L9 9.300L14.800 1.200Z" fill="#d88a2a"/><path d="M8 8.500L7 10.500L9 9.300Z" fill="#555"/></svg>
<div class="a" style="left:496.8px;top:573.3px;width:26.2px;height:1.7px;background:#e19a3a;"></div>
<div class="a" style="left:529.7px;top:573.3px;width:27.3px;height:1.7px;background:#e19a3a;"></div>
<div class="a" style="left:596px;top:573.3px;width:26.5px;height:1.7px;background:#e19a3a;"></div>
<div class="a" style="left:626.5px;top:573.3px;width:29.5px;height:1.7px;background:#e19a3a;"></div>
<div class="a" style="left:661.5px;top:573.3px;width:27.5px;height:1.7px;background:#e19a3a;"></div>
<svg style="left:783px;top:554.5px" width="15" height="12" viewBox="0 0 15 12"><circle cx="5" cy="4.500" r="3" fill="#f8c02c"/><path d="M1 2L2 3M5 0.200V1.300M9 2L8 3" stroke="#f8c02c" stroke-width="0.800"/><path d="M4 10.500H12C14.500 10.500 14.500 7 12 7C12 4.500 8 4 7.200 6.500C5.500 6 4.500 7.500 5 8.200C3 8 2.500 10.500 4 10.500Z" fill="#e8f3fb" stroke="#a9c6dc" stroke-width="0.500"/></svg>
<div class="t" style="top:557px;font-size:9.5px;line-height:9.5px;color:#222;left:803.5px;transform-origin:0 0;transform:scaleX(0.918);">16°C</div>
<svg style="left:835px;top:558.5px" width="8" height="5" viewBox="0 0 8 5"><path d="M0.500 4.500L4 0.800L7.500 4.500" stroke="#222" stroke-width="0.900" fill="none"/></svg>
<svg style="left:848.5px;top:556.5px" width="11" height="9" viewBox="0 0 11 9"><path d="M2.500 7.500H8.500C10.800 7.500 10.800 4.300 8.500 4.300C8.300 1 3.800 0.500 3 3.500C0.500 3.500 0.300 7.500 2.500 7.500Z" fill="none" stroke="#333" stroke-width="0.900"/><path d="M1.500 1L9.500 8.500" stroke="#333" stroke-width="0.900"/></svg>
<svg style="left:866px;top:556px" width="9" height="10.5" viewBox="0 0 9 10.5"><rect x="1.500" y="2.500" width="4.500" height="5" rx="1" fill="none" stroke="#333" stroke-width="0.800"/><path d="M6 4.500L8 3.500V6.500L6 5.500M1 1C3 -0.300 5.500 -0.300 7.500 1M1 9.500C3 10.800 5.500 10.800 7.500 9.500" fill="none" stroke="#333" stroke-width="0.800"/></svg>
<svg style="left:883px;top:555.5px" width="6.5" height="12" viewBox="0 0 6.5 12"><rect x="1.500" y="0.300" width="3.500" height="7" rx="1.750" fill="#222"/><path d="M0.300 5.500C0.300 9.500 6.200 9.500 6.200 5.500M3.250 8.500V11M1.500 11.300H5" stroke="#222" stroke-width="0.800" fill="none"/></svg>
<svg style="left:897px;top:557px" width="12" height="8.5" viewBox="0 0 12 8.5"><rect x="0.500" y="1" width="9.500" height="5.500" fill="none" stroke="#333" stroke-width="0.900"/><rect x="1.800" y="2.300" width="5" height="3" fill="#333"/><path d="M10.500 2.800V4.800" stroke="#333" stroke-width="1"/><circle cx="8" cy="6" r="2.300" fill="#1e9e3e"/></svg>
<svg style="left:913px;top:556.5px" width="11" height="9" viewBox="0 0 11 9"><path d="M0.500 3H2.300L4.500 1V8L2.300 6H0.500Z" fill="none" stroke="#333" stroke-width="0.800"/><path d="M6 2.800C6.800 3.800 6.800 5.200 6 6.200M7.500 1.500C9 3.200 9 5.800 7.500 7.500M9 0.500C11 3 11 6 9 8.500" fill="none" stroke="#555" stroke-width="0.700"/></svg>
<svg style="left:929.5px;top:556px" width="11" height="10" viewBox="0 0 11 10"><path d="M1 9C1 4.500 5 1 10 1M3.800 9C3.800 6 6.500 3.800 10 3.800M6.600 9C6.600 7.500 8 6.600 10 6.600" fill="none" stroke="#6a6a6a" stroke-width="0.900"/><circle cx="9.300" cy="8.800" r="0.800" fill="#555"/></svg>
<div class="t" style="top:551px;font-size:8.5px;line-height:8.5px;color:#222;left:956.75px;transform-origin:0 0;transform:scaleX(0.869);">17:56</div>
<div class="t" style="top:563px;font-size:8.5px;line-height:8.5px;color:#222;left:947.25px;transform-origin:0 0;transform:scaleX(0.881);">26.04.2022</div>
<svg style="left:997px;top:555.5px" width="15" height="16" viewBox="0 0 15 16"><path d="M0.500 0.500H11V8.500H4.500L2.500 10.500V8.500H0.500Z" fill="#222"/><path d="M2.300 2.500H9.200M2.300 4.300H9.200M2.300 6.100H6.500" stroke="#cfd8dd" stroke-width="0.600"/><circle cx="10" cy="11" r="4.300" fill="#eef3f6" stroke="#333" stroke-width="0.800"/></svg><div class="t" style="top:564px;font-size:6.5px;line-height:6.5px;color:#111;left:1003.85px;transform-origin:0 0;transform:scaleX(0.871);">12</div>
<!-- sec_panel -->
<div class="a" style="left:811px;top:0px;width:213px;height:548px;background:#fff;"></div>
<div class="a" style="left:941.4px;top:7.1px;width:6.8px;height:0.9px;background:#333;"></div>
<svg style="left:971.8px;top:3.8px" width="7" height="7" viewBox="0 0 7 7"><rect x="0.450" y="1.600" width="5" height="5" fill="none" stroke="#333" stroke-width="0.800"/><path d="M1.800 1.600V0.450H6.550V5.200H5.400" fill="none" stroke="#333" stroke-width="0.800"/></svg>
<svg style="left:1003.4px;top:4.2px" width="7" height="7" viewBox="0 0 7 7"><path d="M0.300 0.300L6.700 6.700M6.700 0.300L0.300 6.700" stroke="#333" stroke-width="0.900"/></svg>
<svg style="left:824px;top:29.7px" width="5.4" height="3" viewBox="0 0 5.4 3"><path d="M0.400 0.400L2.700 2.600L5 0.400" stroke="#444" stroke-width="1.100" fill="none"/></svg>
<div class="t" style="top:26px;font-size:8.8px;line-height:8.8px;color:#333;font-weight:bold;left:884.9px;transform-origin:0 0;transform:scaleX(0.989);">Katılımcılar (18)</div>
<div class="a" style="left:823.500px;top:51.600px;width:189px;height:20.800px;border:1px solid #c9c9cf;border-radius:4px;background:#fff"></div>
<svg style="left:831px;top:58px" width="8" height="8" viewBox="0 0 8 8"><circle cx="3.300" cy="3.300" r="2.800" fill="none" stroke="#777" stroke-width="0.800"/><path d="M5.300 5.300L7.600 7.600" stroke="#777" stroke-width="0.800"/></svg>
<div class="t" style="top:57px;font-size:9.5px;line-height:9.5px;color:#666;left:842.6px;transform-origin:0 0;transform:scaleX(0.849);">Katılımcı bul</div>
<div class="a" style="left:825.4px;top:78.5px;width:18px;height:17.6px;background:#27ae60;border-radius:4.500px;"></div><div class="t" style="top:84px;font-size:8px;line-height:8px;color:#fff;font-weight:bold;left:834.4px;transform:translateX(-50%);">İ</div>
<div class="t" style="top:83px;font-size:9.8px;line-height:9.8px;color:#444;left:851.2px;transform-origin:0 0;transform:scaleX(0.828);">İpek Nur Karataş (Ben)</div>
<svg style="left:981.8px;top:82.7px" width="9" height="11" viewBox="0 0 9 11"><rect x="3" y="0.500" width="3" height="6" rx="1.500" fill="none" stroke="#7a7a7a" stroke-width="0.800"/><path d="M1.300 5C1.300 9 7.700 9 7.700 5M4.500 8.200V10M3 10.300H6" stroke="#7a7a7a" stroke-width="0.800" fill="none"/></svg>
<svg style="left:996.8px;top:83.2px" width="11.5" height="10" viewBox="0 0 11.5 10"><rect x="0.500" y="2.500" width="7" height="5.500" rx="1" fill="none" stroke="#e2544c" stroke-width="0.800"/><path d="M8.300 4.300L10.800 3V7.500L8.300 6.200" fill="none" stroke="#e2544c" stroke-width="0.800"/><path d="M9 0.500L1.500 9.800" stroke="#e2544c" stroke-width="0.900"/></svg>
<div class="t" style="top:111px;font-size:9.8px;line-height:9.8px;color:#444;left:851.2px;transform-origin:0 0;transform:scaleX(0.780);">İBRAHİM A...</div>
<div class="t" style="top:111px;font-size:9.8px;line-height:9.8px;color:#444;left:902.4px;transform-origin:0 0;transform:scaleX(0.862);">(Oturum Sahibi)</div>
<div class="a" style="left:965px;top:110.87px;width:10.5px;height:8px;background:#1faa3c;border-radius:1.500px;"></div>
<svg style="left:968.2px;top:112.67px" width="4" height="4.5" viewBox="0 0 4 4.5"><path d="M2 4.500V0.800M0.400 2.200L2 0.600L3.600 2.200" stroke="#fff" stroke-width="0.900" fill="none"/></svg>
<svg style="left:981.8px;top:109.87px" width="9" height="11" viewBox="0 0 9 11"><rect x="3" y="0.500" width="3" height="6" rx="1.500" fill="none" stroke="#7a7a7a" stroke-width="0.800"/><path d="M1.300 5C1.300 9 7.700 9 7.700 5M4.500 8.200V10M3 10.300H6" stroke="#7a7a7a" stroke-width="0.800" fill="none"/></svg>
<svg style="left:996.8px;top:110.37px" width="11.5" height="10" viewBox="0 0 11.5 10"><rect x="0.500" y="2.500" width="7" height="5.500" rx="1" fill="none" stroke="#7a7a7a" stroke-width="0.800"/><path d="M8.300 4.300L10.800 3V7.500L8.300 6.200" fill="none" stroke="#7a7a7a" stroke-width="0.800"/></svg>
<div class="a" style="left:825.4px;top:132.84px;width:18px;height:17.6px;background:#e05a10;border-radius:4.500px;"></div><div class="t" style="top:139px;font-size:8px;line-height:8px;color:#fff;font-weight:bold;left:834.4px;transform:translateX(-50%);">AT</div>
<div class="t" style="top:138px;font-size:9.8px;line-height:9.8px;color:#444;left:851.2px;transform-origin:0 0;transform:scaleX(0.788);">Ali Taşcı</div>
<svg style="left:981.8px;top:137.04px" width="9" height="11" viewBox="0 0 9 11"><rect x="3" y="0.500" width="3" height="6" rx="1.500" fill="none" stroke="#e2544c" stroke-width="0.800"/><path d="M1.300 5C1.300 9 7.700 9 7.700 5M4.500 8.200V10M3 10.300H6" stroke="#e2544c" stroke-width="0.800" fill="none"/><path d="M8.200 0.800L0.800 9.800" stroke="#e2544c" stroke-width="0.900"/></svg>
<svg style="left:996.8px;top:137.54px" width="11.5" height="10" viewBox="0 0 11.5 10"><rect x="0.500" y="2.500" width="7" height="5.500" rx="1" fill="none" stroke="#e2544c" stroke-width="0.800"/><path d="M8.300 4.300L10.800 3V7.500L8.300 6.200" fill="none" stroke="#e2544c" stroke-width="0.800"/><path d="M9 0.500L1.500 9.800" stroke="#e2544c" stroke-width="0.900"/></svg>
<div class="t" style="top:165px;font-size:9.8px;line-height:9.8px;color:#444;left:851.2px;transform-origin:0 0;transform:scaleX(0.831);">Burcu Asar</div>
<svg style="left:981.8px;top:164.21px" width="9" height="11" viewBox="0 0 9 11"><rect x="3" y="0.500" width="3" height="6" rx="1.500" fill="none" stroke="#e2544c" stroke-width="0.800"/><path d="M1.300 5C1.300 9 7.700 9 7.700 5M4.500 8.200V10M3 10.300H6" stroke="#e2544c" stroke-width="0.800" fill="none"/><path d="M8.200 0.800L0.800 9.800" stroke="#e2544c" stroke-width="0.900"/></svg>
<svg style="left:996.8px;top:164.71px" width="11.5" height="10" viewBox="0 0 11.5 10"><rect x="0.500" y="2.500" width="7" height="5.500" rx="1" fill="none" stroke="#e2544c" stroke-width="0.800"/><path d="M8.300 4.300L10.800 3V7.500L8.300 6.200" fill="none" stroke="#e2544c" stroke-width="0.800"/><path d="M9 0.500L1.500 9.800" stroke="#e2544c" stroke-width="0.900"/></svg>
<div class="a" style="left:825.4px;top:187.18px;width:18px;height:17.6px;background:#d93831;border-radius:4.500px;"></div><div class="t" style="top:193px;font-size:8px;line-height:8px;color:#fff;font-weight:bold;left:834.4px;transform:translateX(-50%);">Bİ</div>
<div class="t" style="top:192px;font-size:9.8px;line-height:9.8px;color:#444;left:851.2px;transform-origin:0 0;transform:scaleX(0.826);">Buse İpek</div>
<svg style="left:981.8px;top:191.38px" width="9" height="11" viewBox="0 0 9 11"><rect x="3" y="0.500" width="3" height="6" rx="1.500" fill="none" stroke="#e2544c" stroke-width="0.800"/><path d="M1.300 5C1.300 9 7.700 9 7.700 5M4.500 8.200V10M3 10.300H6" stroke="#e2544c" stroke-width="0.800" fill="none"/><path d="M8.200 0.800L0.800 9.800" stroke="#e2544c" stroke-width="0.900"/></svg>
<svg style="left:996.8px;top:191.88px" width="11.5" height="10" viewBox="0 0 11.5 10"><rect x="0.500" y="2.500" width="7" height="5.500" rx="1" fill="none" stroke="#e2544c" stroke-width="0.800"/><path d="M8.300 4.300L10.800 3V7.500L8.300 6.200" fill="none" stroke="#e2544c" stroke-width="0.800"/><path d="M9 0.500L1.500 9.800" stroke="#e2544c" stroke-width="0.900"/></svg>
<div class="a" style="left:825.4px;top:214.35px;width:18px;height:17.6px;background:#1b9f79;border-radius:4.500px;"></div><div class="t" style="top:220px;font-size:8px;line-height:8px;color:#fff;font-weight:bold;left:834.4px;transform:translateX(-50%);">BÇ</div>
<div class="t" style="top:219px;font-size:9.8px;line-height:9.8px;color:#444;left:851.2px;transform-origin:0 0;transform:scaleX(0.860);">Busenur Çilingir</div>
<svg style="left:981.8px;top:218.55px" width="9" height="11" viewBox="0 0 9 11"><rect x="3" y="0.500" width="3" height="6" rx="1.500" fill="none" stroke="#e2544c" stroke-width="0.800"/><path d="M1.300 5C1.300 9 7.700 9 7.700 5M4.500 8.200V10M3 10.300H6" stroke="#e2544c" stroke-width="0.800" fill="none"/><path d="M8.200 0.800L0.800 9.800" stroke="#e2544c" stroke-width="0.900"/></svg>
<svg style="left:996.8px;top:219.05px" width="11.5" height="10" viewBox="0 0 11.5 10"><rect x="0.500" y="2.500" width="7" height="5.500" rx="1" fill="none" stroke="#e2544c" stroke-width="0.800"/><path d="M8.300 4.300L10.800 3V7.500L8.300 6.200" fill="none" stroke="#e2544c" stroke-width="0.800"/><path d="M9 0.500L1.500 9.800" stroke="#e2544c" stroke-width="0.900"/></svg>
<div class="t" style="top:246px;font-size:9.8px;line-height:9.8px;color:#444;left:851.2px;transform-origin:0 0;transform:scaleX(0.839);">cemre özmat</div>
<svg style="left:981.8px;top:245.72px" width="9" height="11" viewBox="0 0 9 11"><rect x="3" y="0.500" width="3" height="6" rx="1.500" fill="none" stroke="#e2544c" stroke-width="0.800"/><path d="M1.300 5C1.300 9 7.700 9 7.700 5M4.500 8.200V10M3 10.300H6" stroke="#e2544c" stroke-width="0.800" fill="none"/><path d="M8.200 0.800L0.800 9.800" stroke="#e2544c" stroke-width="0.900"/></svg>
<svg style="left:996.8px;top:246.22px" width="11.5" height="10" viewBox="0 0 11.5 10"><rect x="0.500" y="2.500" width="7" height="5.500" rx="1" fill="none" stroke="#e2544c" stroke-width="0.800"/><path d="M8.300 4.300L10.800 3V7.500L8.300 6.200" fill="none" stroke="#e2544c" stroke-width="0.800"/><path d="M9 0.500L1.500 9.800" stroke="#e2544c" stroke-width="0.900"/></svg>
<div class="a" style="left:825.4px;top:268.69px;width:18px;height:17.6px;background:#2f8bf2;border-radius:4.500px;"></div><div class="t" style="top:275px;font-size:8px;line-height:8px;color:#fff;font-weight:bold;left:834.4px;transform:translateX(-50%);">Ç</div>
<div class="t" style="top:274px;font-size:9.8px;line-height:9.8px;color:#444;left:851.2px;transform-origin:0 0;transform:scaleX(0.809);">Çağla Kaya</div>
<svg style="left:981.8px;top:272.89px" width="9" height="11" viewBox="0 0 9 11"><rect x="3" y="0.500" width="3" height="6" rx="1.500" fill="none" stroke="#e2544c" stroke-width="0.800"/><path d="M1.300 5C1.300 9 7.700 9 7.700 5M4.500 8.200V10M3 10.300H6" stroke="#e2544c" stroke-width="0.800" fill="none"/><path d="M8.200 0.800L0.800 9.800" stroke="#e2544c" stroke-width="0.900"/></svg>
<svg style="left:996.8px;top:273.39px" width="11.5" height="10" viewBox="0 0 11.5 10"><rect x="0.500" y="2.500" width="7" height="5.500" rx="1" fill="none" stroke="#e2544c" stroke-width="0.800"/><path d="M8.300 4.300L10.800 3V7.500L8.300 6.200" fill="none" stroke="#e2544c" stroke-width="0.800"/><path d="M9 0.500L1.500 9.800" stroke="#e2544c" stroke-width="0.900"/></svg>
<div class="t" style="top:301px;font-size:9.8px;line-height:9.8px;color:#444;left:851.2px;transform-origin:0 0;transform:scaleX(0.859);">Gülten Boduroğlu</div>
<svg style="left:981.8px;top:300.06px" width="9" height="11" viewBox="0 0 9 11"><rect x="3" y="0.500" width="3" height="6" rx="1.500" fill="none" stroke="#e2544c" stroke-width="0.800"/><path d="M1.300 5C1.300 9 7.700 9 7.700 5M4.500 8.200V10M3 10.300H6" stroke="#e2544c" stroke-width="0.800" fill="none"/><path d="M8.200 0.800L0.800 9.800" stroke="#e2544c" stroke-width="0.900"/></svg>
<svg style="left:996.8px;top:300.56px" width="11.5" height="10" viewBox="0 0 11.5 10"><rect x="0.500" y="2.500" width="7" height="5.500" rx="1" fill="none" stroke="#e2544c" stroke-width="0.800"/><path d="M8.300 4.300L10.800 3V7.500L8.300 6.200" fill="none" stroke="#e2544c" stroke-width="0.800"/><path d="M9 0.500L1.500 9.800" stroke="#e2544c" stroke-width="0.900"/></svg>
<div class="a" style="left:825.4px;top:323.03px;width:18px;height:17.6px;background:#25b05a;border-radius:4.500px;"></div><div class="t" style="top:329px;font-size:8px;line-height:8px;color:#fff;font-weight:bold;left:834.4px;transform:translateX(-50%);">HG</div>
<div class="t" style="top:328px;font-size:9.8px;line-height:9.8px;color:#444;left:851.2px;transform-origin:0 0;transform:scaleX(0.829);">hakan güneş</div>
<svg style="left:981.8px;top:327.23px" width="9" height="11" viewBox="0 0 9 11"><rect x="3" y="0.500" width="3" height="6" rx="1.500" fill="none" stroke="#e2544c" stroke-width="0.800"/><path d="M1.300 5C1.300 9 7.700 9 7.700 5M4.500 8.200V10M3 10.300H6" stroke="#e2544c" stroke-width="0.800" fill="none"/><path d="M8.200 0.800L0.800 9.800" stroke="#e2544c" stroke-width="0.900"/></svg>
<svg style="left:996.8px;top:327.73px" width="11.5" height="10" viewBox="0 0 11.5 10"><rect x="0.500" y="2.500" width="7" height="5.500" rx="1" fill="none" stroke="#e2544c" stroke-width="0.800"/><path d="M8.300 4.300L10.800 3V7.500L8.300 6.200" fill="none" stroke="#e2544c" stroke-width="0.800"/><path d="M9 0.500L1.500 9.800" stroke="#e2544c" stroke-width="0.900"/></svg>
<div class="a" style="left:825.4px;top:350.2px;width:18px;height:17.6px;background:#2c3e5c;border-radius:4.500px;"></div><div class="t" style="top:356px;font-size:8px;line-height:8px;color:#fff;font-weight:bold;left:834.4px;transform:translateX(-50%);">H</div>
<div class="t" style="top:355px;font-size:9.8px;line-height:9.8px;color:#444;left:851.2px;transform-origin:0 0;transform:scaleX(0.826);">Hazall</div>
<svg style="left:981.8px;top:354.4px" width="9" height="11" viewBox="0 0 9 11"><rect x="3" y="0.500" width="3" height="6" rx="1.500" fill="none" stroke="#e2544c" stroke-width="0.800"/><path d="M1.300 5C1.300 9 7.700 9 7.700 5M4.500 8.200V10M3 10.300H6" stroke="#e2544c" stroke-width="0.800" fill="none"/><path d="M8.200 0.800L0.800 9.800" stroke="#e2544c" stroke-width="0.900"/></svg>
<svg style="left:996.8px;top:354.9px" width="11.5" height="10" viewBox="0 0 11.5 10"><rect x="0.500" y="2.500" width="7" height="5.500" rx="1" fill="none" stroke="#e2544c" stroke-width="0.800"/><path d="M8.300 4.300L10.800 3V7.500L8.300 6.200" fill="none" stroke="#e2544c" stroke-width="0.800"/><path d="M9 0.500L1.500 9.800" stroke="#e2544c" stroke-width="0.900"/></svg>
<div class="a" style="left:825.4px;top:377.37px;width:18px;height:17.6px;background:#d9560e;border-radius:4.500px;"></div><div class="t" style="top:383px;font-size:8px;line-height:8px;color:#fff;font-weight:bold;left:834.4px;transform:translateX(-50%);">HJ</div>
<div class="t" style="top:382px;font-size:9.8px;line-height:9.8px;color:#444;left:851.2px;transform-origin:0 0;transform:scaleX(0.834);">Hemane Jordy MAPANGOU</div>
<svg style="left:981.8px;top:381.57px" width="9" height="11" viewBox="0 0 9 11"><rect x="3" y="0.500" width="3" height="6" rx="1.500" fill="none" stroke="#e2544c" stroke-width="0.800"/><path d="M1.300 5C1.300 9 7.700 9 7.700 5M4.500 8.200V10M3 10.300H6" stroke="#e2544c" stroke-width="0.800" fill="none"/><path d="M8.200 0.800L0.800 9.800" stroke="#e2544c" stroke-width="0.900"/></svg>
<svg style="left:996.8px;top:382.07px" width="11.5" height="10" viewBox="0 0 11.5 10"><rect x="0.500" y="2.500" width="7" height="5.500" rx="1" fill="none" stroke="#e2544c" stroke-width="0.800"/><path d="M8.300 4.300L10.800 3V7.500L8.300 6.200" fill="none" stroke="#e2544c" stroke-width="0.800"/><path d="M9 0.500L1.500 9.800" stroke="#e2544c" stroke-width="0.900"/></svg>
<div class="a" style="left:825.4px;top:404.54px;width:18px;height:17.6px;background:#8f3cc6;border-radius:4.500px;"></div><div class="t" style="top:410px;font-size:8px;line-height:8px;color:#fff;font-weight:bold;left:834.4px;transform:translateX(-50%);">İ</div>
<div class="t" style="top:409px;font-size:9.8px;line-height:9.8px;color:#444;left:851.2px;transform-origin:0 0;transform:scaleX(0.857);">İlayda tokcan</div>
<svg style="left:981.8px;top:408.74px" width="9" height="11" viewBox="0 0 9 11"><rect x="3" y="0.500" width="3" height="6" rx="1.500" fill="none" stroke="#e2544c" stroke-width="0.800"/><path d="M1.300 5C1.300 9 7.700 9 7.700 5M4.500 8.200V10M3 10.300H6" stroke="#e2544c" stroke-width="0.800" fill="none"/><path d="M8.200 0.800L0.800 9.800" stroke="#e2544c" stroke-width="0.900"/></svg>
<svg style="left:996.8px;top:409.24px" width="11.5" height="10" viewBox="0 0 11.5 10"><rect x="0.500" y="2.500" width="7" height="5.500" rx="1" fill="none" stroke="#e2544c" stroke-width="0.800"/><path d="M8.300 4.300L10.800 3V7.500L8.300 6.200" fill="none" stroke="#e2544c" stroke-width="0.800"/><path d="M9 0.500L1.500 9.800" stroke="#e2544c" stroke-width="0.900"/></svg>
<div class="t" style="top:437px;font-size:9.8px;line-height:9.8px;color:#444;left:851.2px;transform-origin:0 0;transform:scaleX(0.882);">Muhammed Ali Uğurlu</div>
<svg style="left:981.8px;top:435.91px" width="9" height="11" viewBox="0 0 9 11"><rect x="3" y="0.500" width="3" height="6" rx="1.500" fill="none" stroke="#e2544c" stroke-width="0.800"/><path d="M1.300 5C1.300 9 7.700 9 7.700 5M4.500 8.200V10M3 10.300H6" stroke="#e2544c" stroke-width="0.800" fill="none"/><path d="M8.200 0.800L0.800 9.800" stroke="#e2544c" stroke-width="0.900"/></svg>
<svg style="left:996.8px;top:436.41px" width="11.5" height="10" viewBox="0 0 11.5 10"><rect x="0.500" y="2.500" width="7" height="5.500" rx="1" fill="none" stroke="#e2544c" stroke-width="0.800"/><path d="M8.300 4.300L10.800 3V7.500L8.300 6.200" fill="none" stroke="#e2544c" stroke-width="0.800"/><path d="M9 0.500L1.500 9.800" stroke="#e2544c" stroke-width="0.900"/></svg>
<div class="a" style="left:825.4px;top:458.88px;width:18px;height:17.6px;background:#fffde2;border-radius:4.500px;"></div>
<div class="t" style="top:464px;font-size:9.8px;line-height:9.8px;color:#444;left:851.2px;transform-origin:0 0;transform:scaleX(0.799);">Ömer Önder</div>
<svg style="left:981.8px;top:463.08px" width="9" height="11" viewBox="0 0 9 11"><rect x="3" y="0.500" width="3" height="6" rx="1.500" fill="none" stroke="#e2544c" stroke-width="0.800"/><path d="M1.300 5C1.300 9 7.700 9 7.700 5M4.500 8.200V10M3 10.300H6" stroke="#e2544c" stroke-width="0.800" fill="none"/><path d="M8.200 0.800L0.800 9.800" stroke="#e2544c" stroke-width="0.900"/></svg>
<svg style="left:996.8px;top:463.58px" width="11.5" height="10" viewBox="0 0 11.5 10"><rect x="0.500" y="2.500" width="7" height="5.500" rx="1" fill="none" stroke="#e2544c" stroke-width="0.800"/><path d="M8.300 4.300L10.800 3V7.500L8.300 6.200" fill="none" stroke="#e2544c" stroke-width="0.800"/><path d="M9 0.500L1.500 9.800" stroke="#e2544c" stroke-width="0.900"/></svg>
<div class="a" style="left:825.4px;top:486.05px;width:18px;height:17.6px;background:#f4a11c;border-radius:4.500px;"></div><div class="t" style="top:492px;font-size:8px;line-height:8px;color:#fff;font-weight:bold;left:834.4px;transform:translateX(-50%);">SG</div>
<div class="t" style="top:491px;font-size:9.8px;line-height:9.8px;color:#444;left:851.2px;transform-origin:0 0;transform:scaleX(0.812);">Sila Gürhan</div>
<svg style="left:981.8px;top:490.25px" width="9" height="11" viewBox="0 0 9 11"><rect x="3" y="0.500" width="3" height="6" rx="1.500" fill="none" stroke="#e2544c" stroke-width="0.800"/><path d="M1.300 5C1.300 9 7.700 9 7.700 5M4.500 8.200V10M3 10.300H6" stroke="#e2544c" stroke-width="0.800" fill="none"/><path d="M8.200 0.800L0.800 9.800" stroke="#e2544c" stroke-width="0.900"/></svg>
<svg style="left:996.8px;top:490.75px" width="11.5" height="10" viewBox="0 0 11.5 10"><rect x="0.500" y="2.500" width="7" height="5.500" rx="1" fill="none" stroke="#e2544c" stroke-width="0.800"/><path d="M8.300 4.300L10.800 3V7.500L8.300 6.200" fill="none" stroke="#e2544c" stroke-width="0.800"/><path d="M9 0.500L1.500 9.800" stroke="#e2544c" stroke-width="0.900"/></svg>
<svg style="left:825.400px;top:105.67px" width="18" height="17.600" viewBox="0 0 18 18" preserveAspectRatio="none"><defs><clipPath id="pc114"><rect width="18" height="18" rx="4"/></clipPath></defs><g clip-path="url(#pc114)"><rect width="18" height="18" fill="#e4e4e6"/><ellipse cx="8.500" cy="6.500" rx="3.600" ry="4.500" fill="#c49a88"/><path d="M4.800 4.500C5 0.500 12 0.500 12.200 4.500C10.500 2.500 6.500 2.500 4.800 4.500Z" fill="#4a4440"/><path d="M2 18C2 12.500 5.500 11.500 8.500 11.500C11.500 11.500 15 12.500 15 18Z" fill="#f6f6f8"/><path d="M7.800 11.500H9.200L9.600 16H7.400Z" fill="#6a3a3a"/><rect x="6.800" y="8.300" width="3.400" height="0.900" fill="#5a4038"/></g></svg>
<svg style="left:825.400px;top:160.01px" width="18" height="17.600" viewBox="0 0 18 18" preserveAspectRatio="none"><defs><clipPath id="pc168"><rect width="18" height="18" rx="4"/></clipPath></defs><g clip-path="url(#pc168)"><rect width="18" height="18" fill="#2e4f86"/><rect y="0" width="18" height="4" fill="#1f2c48"/><rect x="5" y="5" width="13" height="8" fill="#b8c8de"/><rect x="0" y="11" width="18" height="7" fill="#e8ecf2"/><ellipse cx="3.500" cy="9.500" rx="2" ry="3.500" fill="#f4f4f6"/><circle cx="4" cy="5.800" r="1.500" fill="#8a6a5a"/><rect x="0" y="15.500" width="18" height="2.500" fill="#3a4a6a"/></g></svg>
<svg style="left:825.400px;top:241.52px" width="18" height="17.600" viewBox="0 0 18 18" preserveAspectRatio="none"><defs><clipPath id="pc250"><rect width="18" height="18" rx="4"/></clipPath></defs><g clip-path="url(#pc250)"><rect width="18" height="18" fill="#161616"/><circle cx="9" cy="9" r="7.500" fill="#2a2927"/><ellipse cx="9" cy="8" rx="3" ry="3.800" fill="#4a4440"/><path d="M3.500 16C4 12 7 11.500 9 11.500C11 11.500 14 12 14.500 16Z" fill="#3a3836"/></g></svg>
<svg style="left:825.400px;top:295.86px" width="18" height="17.600" viewBox="0 0 18 18" preserveAspectRatio="none"><defs><clipPath id="pc304"><rect width="18" height="18" rx="4"/></clipPath></defs><g clip-path="url(#pc304)"><rect width="18" height="18" fill="#6a7a3a"/><rect width="18" height="7" fill="#a8b86a"/><rect y="12" width="18" height="6" fill="#3a3a52"/><ellipse cx="9" cy="7.500" rx="3" ry="3.600" fill="#c8a088"/><path d="M5.500 6C5.500 1.500 12.500 1.500 12.500 6C11.500 4 6.500 4 5.500 6Z" fill="#2a2220"/><path d="M3 18C3 12.500 6.500 11.500 9 11.500C11.500 11.500 15 12.500 15 18Z" fill="#4a4a72"/></g></svg>
<svg style="left:825.400px;top:431.71px" width="18" height="17.600" viewBox="0 0 18 18" preserveAspectRatio="none"><defs><clipPath id="pc440"><rect width="18" height="18" rx="4"/></clipPath></defs><g clip-path="url(#pc440)"><rect width="18" height="18" fill="#3a2a12"/><rect width="10" height="5.500" fill="#b86a14"/><rect x="10" width="8" height="5.500" fill="#3b2a5a"/><rect y="5" width="18" height="3" fill="#6fae1e"/><rect y="8" width="9" height="6" fill="#5a4a14"/><rect y="13" width="9" height="5" fill="#9a8a5a"/><path d="M6 14C8 10 12 8.500 15 8L18 9.500V18H7Z" fill="#3a237a"/><ellipse cx="11.800" cy="7" rx="2.400" ry="3.200" fill="#a87860"/><ellipse cx="11.800" cy="4" rx="2.800" ry="1.800" fill="#2a2630"/></g></svg>
<div class="a" style="left:1017.7px;top:75.2px;width:4.6px;height:423.5px;background:#9c9ca4;border-radius:2.300px;"></div>
<div class="a" style="left:848px;top:523.6px;width:40px;height:15px;background:#f0f0f6;border-radius:4px;"></div>
<div class="t" style="top:527px;font-size:9px;line-height:9px;color:#333;left:853.25px;transform-origin:0 0;transform:scaleX(0.880);">Davet et</div>
<div class="a" style="left:925px;top:523.6px;width:62.6px;height:15px;background:#f0f0f6;border-radius:4px;"></div>
<div class="t" style="top:527px;font-size:9px;line-height:9px;color:#333;left:930.05px;transform-origin:0 0;transform:scaleX(0.846);">Beni Sessize Al</div>
</body>
</html>
